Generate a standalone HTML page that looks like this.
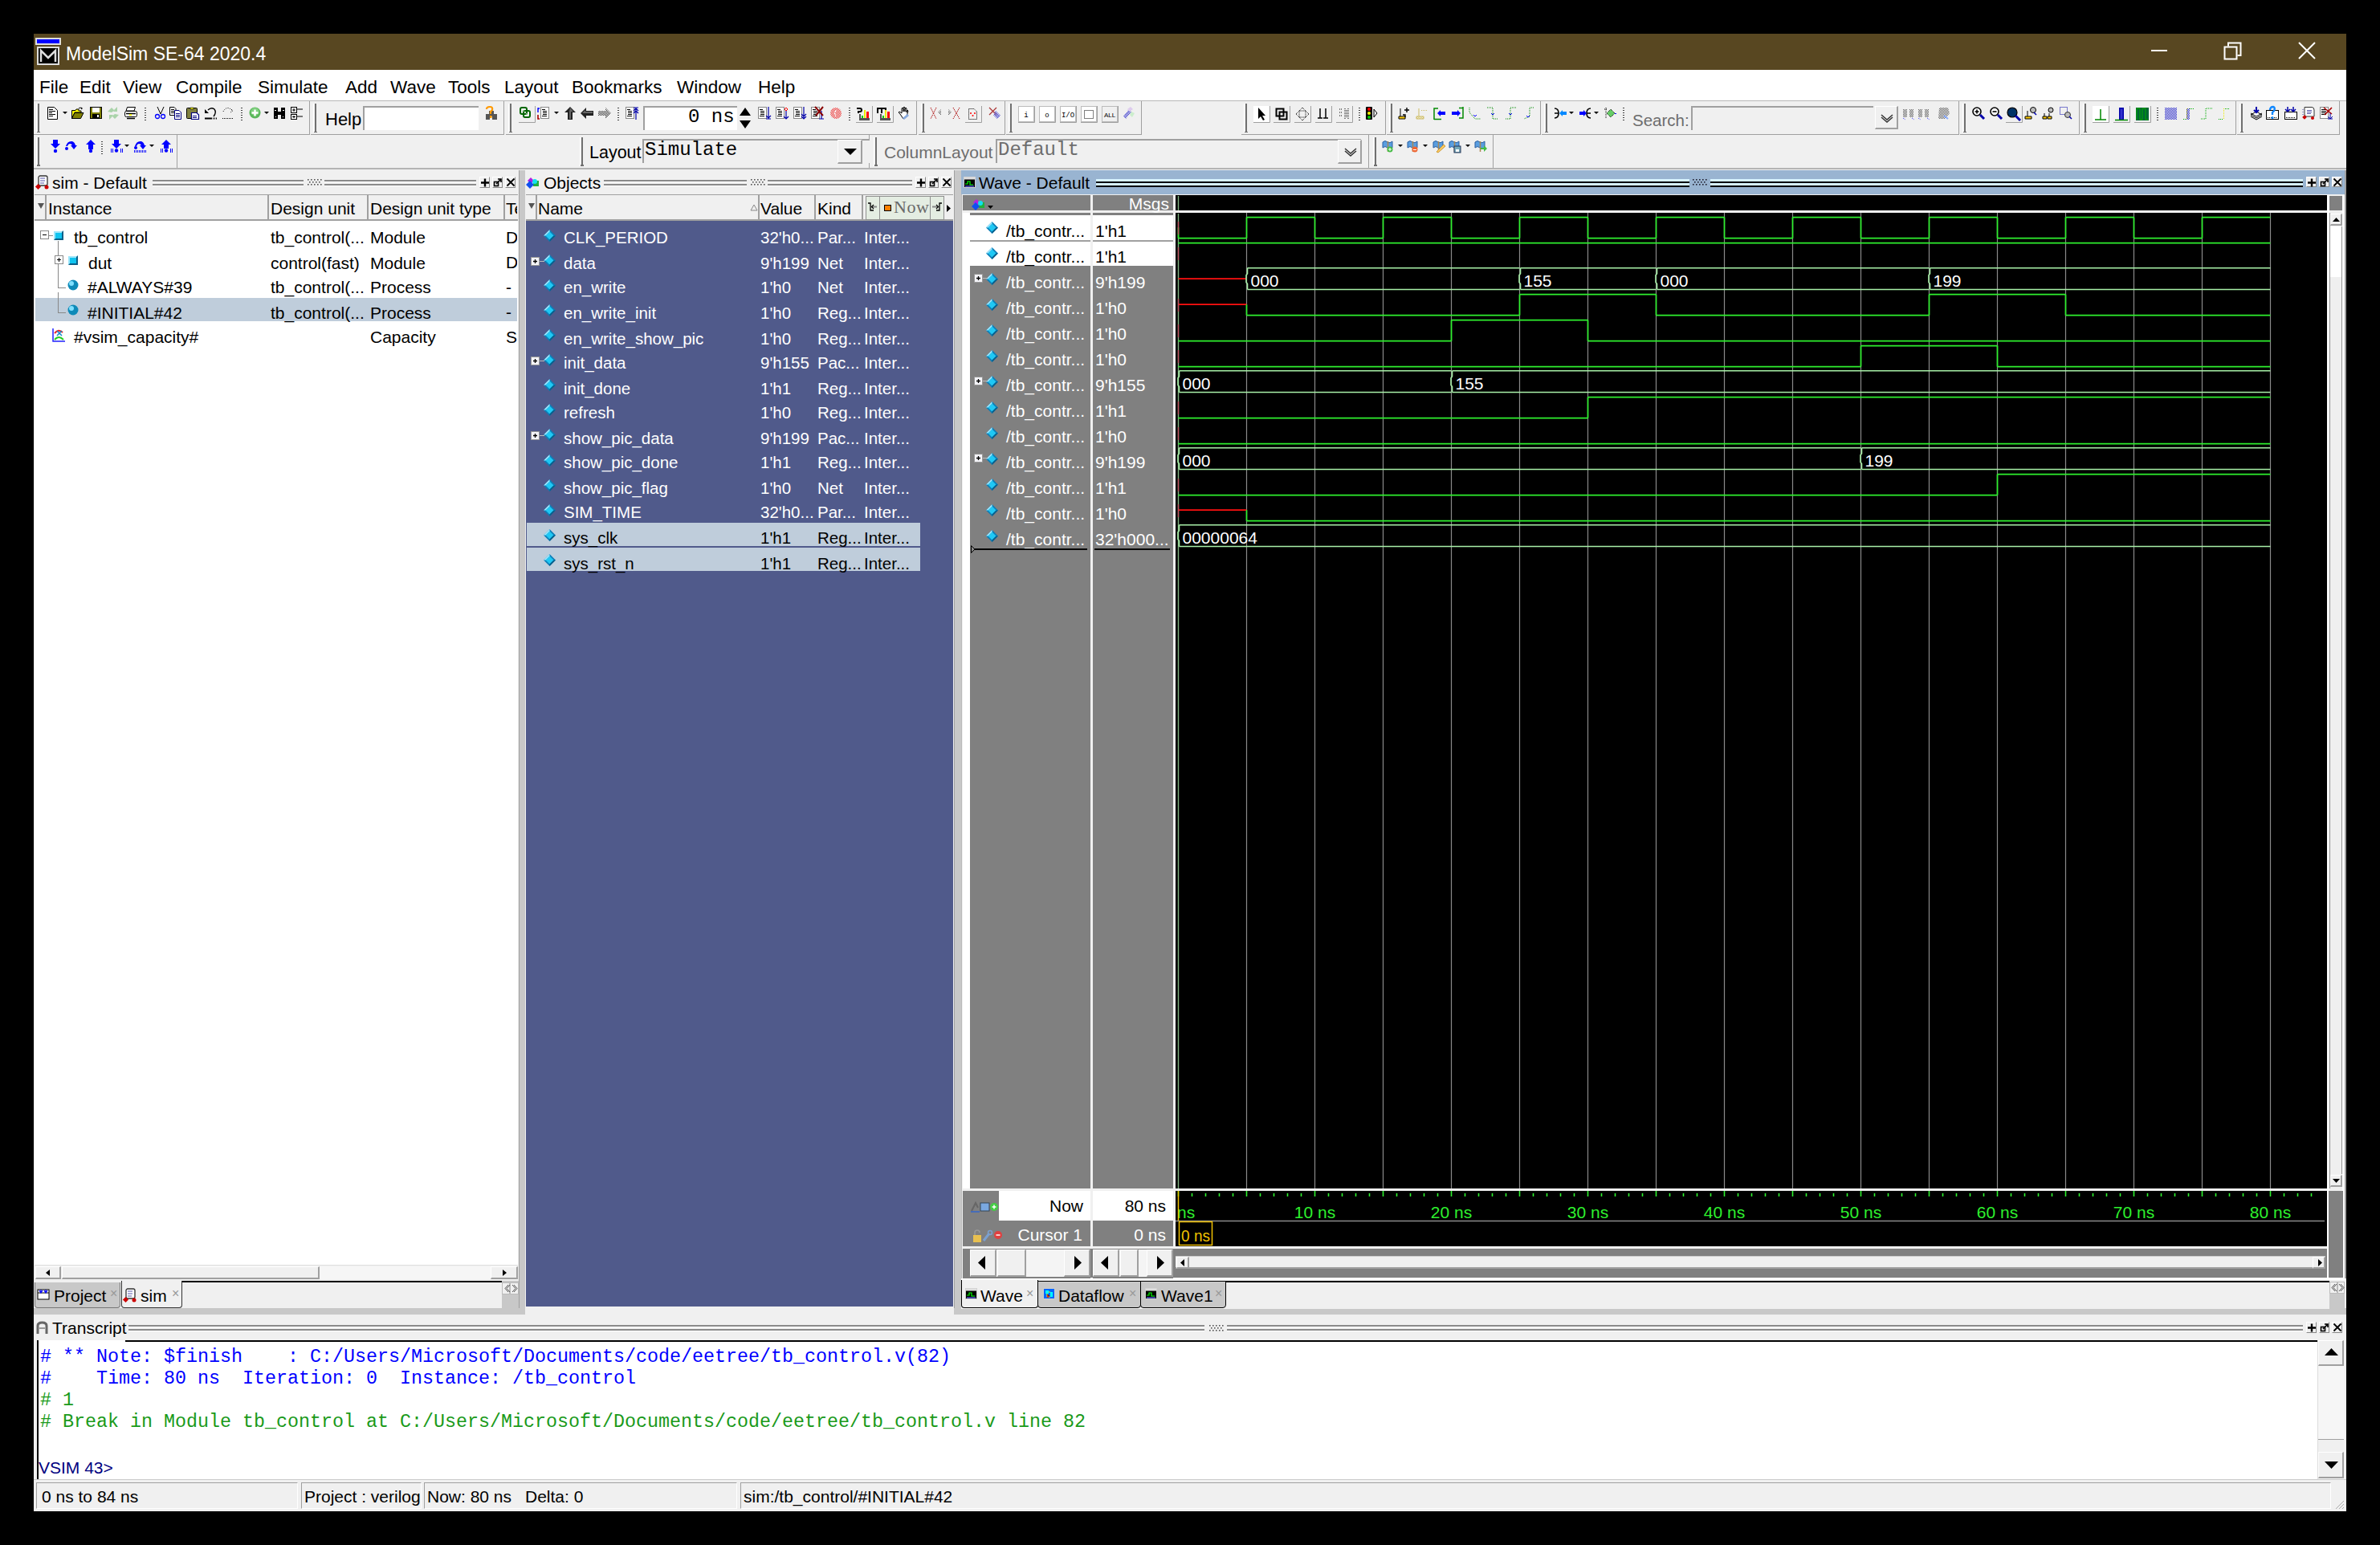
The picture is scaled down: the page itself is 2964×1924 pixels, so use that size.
<!DOCTYPE html><html><head><meta charset="utf-8"><style>
html,body{margin:0;padding:0;background:#000;width:2964px;height:1924px;overflow:hidden;position:relative}
div{box-sizing:border-box}
.s{position:absolute;font-family:"Liberation Sans",sans-serif;white-space:nowrap}
.m{position:absolute;font-family:"Liberation Mono",monospace;white-space:nowrap}
svg{position:absolute;overflow:visible}
</style></head><body>
<div style="position:absolute;left:42px;top:42px;width:2880px;height:1840px;background:#f0f0f0"></div>
<div style="position:absolute;left:42px;top:42px;width:2880px;height:45px;background:#584721"></div>
<div style="position:absolute;left:44px;top:47px;width:32px;height:9px;background:#0000ff;border:2px solid #ddd"></div>
<div style="position:absolute;left:46px;top:58px;width:28px;height:23px;background:#000;border:2px solid #ddd"></div>
<svg style="left:46px;top:58px" width="28" height="23"><path d="M5 19 V5 L14 14 L23 5 V19" stroke="#ddd" stroke-width="2.5" fill="none"/></svg>
<div class="s" style="left:82px;top:52px;font-size:23px;line-height:30px;color:#fff;">ModelSim SE-64 2020.4</div>
<div style="position:absolute;left:2679px;top:62px;width:20px;height:2px;background:#fff"></div>
<svg style="left:2768px;top:51px" width="26" height="26"><rect x="2.5" y="7.5" width="15" height="15" fill="none" stroke="#fff" stroke-width="2"/><path d="M7 6.5 V2.5 H22.5 V18 H18.5" fill="none" stroke="#fff" stroke-width="2"/></svg>
<svg style="left:2861px;top:51px" width="26" height="26"><path d="M2 2 L22 22 M22 2 L2 22" stroke="#fff" stroke-width="2"/></svg>
<div style="position:absolute;left:42px;top:87px;width:2880px;height:38px;background:#fff"></div>
<div class="s" style="left:49px;top:94px;font-size:22.5px;line-height:29px;color:#000;">File</div>
<div class="s" style="left:99px;top:94px;font-size:22.5px;line-height:29px;color:#000;">Edit</div>
<div class="s" style="left:153px;top:94px;font-size:22.5px;line-height:29px;color:#000;">View</div>
<div class="s" style="left:219px;top:94px;font-size:22.5px;line-height:29px;color:#000;">Compile</div>
<div class="s" style="left:321px;top:94px;font-size:22.5px;line-height:29px;color:#000;">Simulate</div>
<div class="s" style="left:430px;top:94px;font-size:22.5px;line-height:29px;color:#000;">Add</div>
<div class="s" style="left:486px;top:94px;font-size:22.5px;line-height:29px;color:#000;">Wave</div>
<div class="s" style="left:558px;top:94px;font-size:22.5px;line-height:29px;color:#000;">Tools</div>
<div class="s" style="left:628px;top:94px;font-size:22.5px;line-height:29px;color:#000;">Layout</div>
<div class="s" style="left:712px;top:94px;font-size:22.5px;line-height:29px;color:#000;">Bookmarks</div>
<div class="s" style="left:843px;top:94px;font-size:22.5px;line-height:29px;color:#000;">Window</div>
<div class="s" style="left:944px;top:94px;font-size:22.5px;line-height:29px;color:#000;">Help</div>
<div style="position:absolute;left:42px;top:125px;width:2880px;height:85px;background:#f0f0f0;border-top:1px solid #b8b8b8"></div>
<div style="position:absolute;left:42px;top:126px;width:344px;height:42px;border-right:1.5px solid #a0a0a0;border-bottom:1.5px solid #a0a0a0"></div>
<div style="position:absolute;left:45px;top:129px;width:4px;height:36px;border-left:1px solid #fff;border-right:2px solid #707070"></div>
<div style="position:absolute;left:46px;top:163.5px;width:4px;height:1.5px;background:#707070"></div>
<div style="position:absolute;left:387px;top:126px;width:241px;height:42px;border-right:1.5px solid #a0a0a0;border-bottom:1.5px solid #a0a0a0"></div>
<div style="position:absolute;left:390px;top:129px;width:4px;height:36px;border-left:1px solid #fff;border-right:2px solid #707070"></div>
<div style="position:absolute;left:391px;top:163.5px;width:4px;height:1.5px;background:#707070"></div>
<div style="position:absolute;left:630px;top:126px;width:512px;height:42px;border-right:1.5px solid #a0a0a0;border-bottom:1.5px solid #a0a0a0"></div>
<div style="position:absolute;left:633px;top:129px;width:4px;height:36px;border-left:1px solid #fff;border-right:2px solid #707070"></div>
<div style="position:absolute;left:634px;top:163.5px;width:4px;height:1.5px;background:#707070"></div>
<div style="position:absolute;left:1144px;top:126px;width:108px;height:42px;border-right:1.5px solid #a0a0a0;border-bottom:1.5px solid #a0a0a0"></div>
<div style="position:absolute;left:1147px;top:129px;width:4px;height:36px;border-left:1px solid #fff;border-right:2px solid #707070"></div>
<div style="position:absolute;left:1148px;top:163.5px;width:4px;height:1.5px;background:#707070"></div>
<div style="position:absolute;left:1253px;top:126px;width:169px;height:42px;border-right:1.5px solid #a0a0a0;border-bottom:1.5px solid #a0a0a0"></div>
<div style="position:absolute;left:1256px;top:129px;width:4px;height:36px;border-left:1px solid #fff;border-right:2px solid #707070"></div>
<div style="position:absolute;left:1257px;top:163.5px;width:4px;height:1.5px;background:#707070"></div>
<div style="position:absolute;left:1546px;top:126px;width:180px;height:42px;border-right:1.5px solid #a0a0a0;border-bottom:1.5px solid #a0a0a0"></div>
<div style="position:absolute;left:1549px;top:129px;width:4px;height:36px;border-left:1px solid #fff;border-right:2px solid #707070"></div>
<div style="position:absolute;left:1550px;top:163.5px;width:4px;height:1.5px;background:#707070"></div>
<div style="position:absolute;left:1727px;top:126px;width:192px;height:42px;border-right:1.5px solid #a0a0a0;border-bottom:1.5px solid #a0a0a0"></div>
<div style="position:absolute;left:1730px;top:129px;width:4px;height:36px;border-left:1px solid #fff;border-right:2px solid #707070"></div>
<div style="position:absolute;left:1731px;top:163.5px;width:4px;height:1.5px;background:#707070"></div>
<div style="position:absolute;left:1920px;top:126px;width:520px;height:42px;border-right:1.5px solid #a0a0a0;border-bottom:1.5px solid #a0a0a0"></div>
<div style="position:absolute;left:1923px;top:129px;width:4px;height:36px;border-left:1px solid #fff;border-right:2px solid #707070"></div>
<div style="position:absolute;left:1924px;top:163.5px;width:4px;height:1.5px;background:#707070"></div>
<div style="position:absolute;left:2441px;top:126px;width:149px;height:42px;border-right:1.5px solid #a0a0a0;border-bottom:1.5px solid #a0a0a0"></div>
<div style="position:absolute;left:2444px;top:129px;width:4px;height:36px;border-left:1px solid #fff;border-right:2px solid #707070"></div>
<div style="position:absolute;left:2445px;top:163.5px;width:4px;height:1.5px;background:#707070"></div>
<div style="position:absolute;left:2591px;top:126px;width:194px;height:42px;border-right:1.5px solid #a0a0a0;border-bottom:1.5px solid #a0a0a0"></div>
<div style="position:absolute;left:2594px;top:129px;width:4px;height:36px;border-left:1px solid #fff;border-right:2px solid #707070"></div>
<div style="position:absolute;left:2595px;top:163.5px;width:4px;height:1.5px;background:#707070"></div>
<div style="position:absolute;left:2786px;top:126px;width:128px;height:42px;border-right:1.5px solid #a0a0a0;border-bottom:1.5px solid #a0a0a0"></div>
<div style="position:absolute;left:2789px;top:129px;width:4px;height:36px;border-left:1px solid #fff;border-right:2px solid #707070"></div>
<div style="position:absolute;left:2790px;top:163.5px;width:4px;height:1.5px;background:#707070"></div>
<div style="position:absolute;left:42px;top:168px;width:179px;height:41.5px;border-right:1.5px solid #a0a0a0;border-bottom:1.5px solid #a0a0a0"></div>
<div style="position:absolute;left:45px;top:171px;width:4px;height:35.5px;border-left:1px solid #fff;border-right:2px solid #707070"></div>
<div style="position:absolute;left:46px;top:205.0px;width:4px;height:1.5px;background:#707070"></div>
<div style="position:absolute;left:719px;top:168px;width:364px;height:41.5px;border-right:1.5px solid #a0a0a0;border-bottom:1.5px solid #a0a0a0"></div>
<div style="position:absolute;left:722px;top:171px;width:4px;height:35.5px;border-left:1px solid #fff;border-right:2px solid #707070"></div>
<div style="position:absolute;left:723px;top:205.0px;width:4px;height:1.5px;background:#707070"></div>
<div style="position:absolute;left:1085px;top:168px;width:620px;height:41.5px;border-right:1.5px solid #a0a0a0;border-bottom:1.5px solid #a0a0a0"></div>
<div style="position:absolute;left:1088px;top:171px;width:4px;height:35.5px;border-left:1px solid #fff;border-right:2px solid #707070"></div>
<div style="position:absolute;left:1089px;top:205.0px;width:4px;height:1.5px;background:#707070"></div>
<div style="position:absolute;left:1707px;top:168px;width:153px;height:41.5px;border-right:1.5px solid #a0a0a0;border-bottom:1.5px solid #a0a0a0"></div>
<div style="position:absolute;left:1710px;top:171px;width:4px;height:35.5px;border-left:1px solid #fff;border-right:2px solid #707070"></div>
<div style="position:absolute;left:1711px;top:205.0px;width:4px;height:1.5px;background:#707070"></div>
<div class="s" style="left:405px;top:134px;font-size:22px;line-height:29px;color:#000;">Help</div>
<div style="position:absolute;left:452px;top:132px;width:144px;height:30px;background:#fff;border-top:2px solid #a0a0a0;border-left:2px solid #a0a0a0"></div>
<div style="position:absolute;left:801px;top:132px;width:117px;height:30px;background:#fff;border-top:2px solid #a0a0a0;border-left:2px solid #a0a0a0"></div>
<div class="m" style="left:857px;top:131px;font-size:24px;line-height:30px">0 ns</div>
<svg style="left:918px;top:131px" width="20" height="32"><path d="M3 13 L10 3 L17 13Z M3 19 L10 29 L17 19Z" fill="#000"/></svg>
<div class="s" style="left:734px;top:176px;font-size:21.5px;line-height:28px;color:#000;">Layout</div>
<div style="position:absolute;left:800px;top:173px;width:283px;height:30px;background:#f0f0f0;border-top:2px solid #a0a0a0;border-left:2px solid #a0a0a0"></div>
<div class="m" style="left:803px;top:172px;font-size:24px;line-height:30px;color:#000">Simulate</div>
<div style="position:absolute;left:1043px;top:174px;width:31px;height:30px;background:#f0f0f0;border-right:2px solid #a0a0a0;border-bottom:2px solid #a0a0a0;border-top:1px solid #fff;border-left:1px solid #fff"></div>
<svg style="left:1050px;top:183px" width="18" height="12"><path d="M1 2 H17 L9 10Z" fill="#000"/></svg>
<div class="s" style="left:1101px;top:176px;font-size:21px;line-height:27px;color:#6d6d6d;">ColumnLayout</div>
<div style="position:absolute;left:1240px;top:173px;width:455px;height:30px;background:#f0f0f0;border-top:2px solid #a0a0a0;border-left:2px solid #a0a0a0"></div>
<div class="m" style="left:1243px;top:172px;font-size:24px;line-height:30px;color:#6d6d6d">Default</div>
<div style="position:absolute;left:1666px;top:174px;width:30px;height:30px;background:#f0f0f0;border-right:2px solid #a0a0a0;border-bottom:2px solid #a0a0a0;border-top:1px solid #fff;border-left:1px solid #fff"></div>
<svg style="left:1673px;top:183px" width="18" height="12"><path d="M2 2 L9 8 L16 2 M2 5 L9 11 L16 5" stroke="#333" stroke-width="1.5" fill="none"/></svg>
<div class="s" style="left:2033px;top:136px;font-size:20.5px;line-height:27px;color:#6d6d6d;">Search:</div>
<div style="position:absolute;left:2106px;top:132px;width:227px;height:30px;background:#f0f0f0;border-top:2px solid #a0a0a0;border-left:2px solid #a0a0a0"></div>
<div style="position:absolute;left:2335px;top:132px;width:29px;height:29px;background:#f0f0f0;border-right:2px solid #a0a0a0;border-bottom:2px solid #a0a0a0;border-top:1px solid #fff;border-left:1px solid #fff"></div>
<svg style="left:2341px;top:141px" width="18" height="12"><path d="M2 2 L9 8 L16 2 M2 5 L9 11 L16 5" stroke="#333" stroke-width="1.5" fill="none"/></svg>
<div style="position:absolute;left:180px;top:134px;width:2px;height:18px;background:repeating-linear-gradient(180deg,#444 0 1.5px,transparent 1.5px 3px);width:1.5px"></div>
<div style="position:absolute;left:300px;top:134px;width:2px;height:18px;background:repeating-linear-gradient(180deg,#444 0 1.5px,transparent 1.5px 3px);width:1.5px"></div>
<div style="position:absolute;left:769px;top:134px;width:2px;height:18px;background:repeating-linear-gradient(180deg,#444 0 1.5px,transparent 1.5px 3px);width:1.5px"></div>
<div style="position:absolute;left:1057px;top:134px;width:2px;height:18px;background:repeating-linear-gradient(180deg,#444 0 1.5px,transparent 1.5px 3px);width:1.5px"></div>
<div style="position:absolute;left:1692px;top:134px;width:2px;height:18px;background:repeating-linear-gradient(180deg,#444 0 1.5px,transparent 1.5px 3px);width:1.5px"></div>
<div style="position:absolute;left:2021px;top:134px;width:2px;height:18px;background:repeating-linear-gradient(180deg,#444 0 1.5px,transparent 1.5px 3px);width:1.5px"></div>
<div style="position:absolute;left:2686px;top:134px;width:2px;height:18px;background:repeating-linear-gradient(180deg,#444 0 1.5px,transparent 1.5px 3px);width:1.5px"></div>
<div style="position:absolute;left:126px;top:176px;width:2px;height:16px;background:repeating-linear-gradient(180deg,#444 0 1.5px,transparent 1.5px 3px);width:1.5px"></div>
<div style="position:absolute;left:42px;top:209px;width:2880px;height:2px;background:#b4b4b4"></div>
<div style="position:absolute;left:646px;top:212px;width:8px;height:1425px;background:#c8c8c8;border-left:1px solid #a0a0a0"></div>
<div style="position:absolute;left:1188px;top:212px;width:9px;height:1425px;background:#c8c8c8;border-left:1px solid #a0a0a0"></div>
<div style="position:absolute;left:42px;top:212px;width:604px;height:1425px;background:#f0f0f0"></div>
<svg style="left:44px;top:218px" width="18" height="18"><rect x="4" y="1" width="11" height="12" rx="2" fill="#fff" stroke="#333" stroke-width="1.3"/><path d="M6 4H12M6 7H12M6 10H11" stroke="#55a" stroke-width="1"/><rect x="1" y="12" width="5" height="5" fill="#c00" transform="rotate(45 3.5 14.5)"/><circle cx="14" cy="15" r="2.5" fill="#c00"/></svg>
<div class="s" style="left:65px;top:214px;font-size:21px;line-height:27px;color:#000;">sim - Default</div>
<div style="position:absolute;left:190px;top:224px;width:403px;height:1.5px;background:#8a8a8a"></div>
<div style="position:absolute;left:190px;top:225.5px;width:403px;height:1.0px;background:#fff"></div>
<div style="position:absolute;left:190px;top:229px;width:403px;height:1.5px;background:#8a8a8a"></div>
<div style="position:absolute;left:190px;top:230.5px;width:403px;height:1.0px;background:#fff"></div>
<div style="position:absolute;left:378px;top:222px;width:26px;height:11px;background:#f0f0f0"></div>
<svg style="left:0;top:223px" width="2964" height="10"><rect x="383" y="0" width="1.6" height="1.6" fill="#555"/><rect x="387" y="0" width="1.6" height="1.6" fill="#555"/><rect x="391" y="0" width="1.6" height="1.6" fill="#555"/><rect x="395" y="0" width="1.6" height="1.6" fill="#555"/><rect x="399" y="0" width="1.6" height="1.6" fill="#555"/><rect x="385" y="3" width="1.6" height="1.6" fill="#555"/><rect x="389" y="3" width="1.6" height="1.6" fill="#555"/><rect x="393" y="3" width="1.6" height="1.6" fill="#555"/><rect x="397" y="3" width="1.6" height="1.6" fill="#555"/><rect x="383" y="6" width="1.6" height="1.6" fill="#555"/><rect x="387" y="6" width="1.6" height="1.6" fill="#555"/><rect x="391" y="6" width="1.6" height="1.6" fill="#555"/><rect x="395" y="6" width="1.6" height="1.6" fill="#555"/><rect x="399" y="6" width="1.6" height="1.6" fill="#555"/></svg>
<div style="position:absolute;left:597px;top:220px;width:13px;height:14px;background:#f0f0f0;border-right:1px solid #888;border-bottom:1px solid #888;border-top:1px solid #fff;border-left:1px solid #fff"></div>
<svg style="left:598px;top:221px" width="12" height="13"><path d="M6 1.5V11.5M1 6.5H11" stroke="#000" stroke-width="2.4"/></svg>
<div style="position:absolute;left:613px;top:220px;width:13px;height:14px;background:#f0f0f0;border-right:1px solid #888;border-bottom:1px solid #888;border-top:1px solid #fff;border-left:1px solid #fff"></div>
<svg style="left:614px;top:221px" width="12" height="13"><rect x="1.5" y="5.5" width="5" height="5" fill="none" stroke="#000" stroke-width="1.6"/><path d="M4 8 L10 2 M6 2H10V6" stroke="#000" stroke-width="1.6" fill="none"/></svg>
<div style="position:absolute;left:629px;top:220px;width:13px;height:14px;background:#f0f0f0;border-right:1px solid #888;border-bottom:1px solid #888;border-top:1px solid #fff;border-left:1px solid #fff"></div>
<svg style="left:630px;top:221px" width="12" height="13"><path d="M1.5 1.5L10.5 10.5M10.5 1.5L1.5 10.5" stroke="#000" stroke-width="1.8"/></svg>
<div style="position:absolute;left:43px;top:242px;width:602px;height:33px;background:#f0f0f0;border-top:1px solid #a0a0a0;border-bottom:2px solid #a0a0a0"></div>
<div style="position:absolute;left:56px;top:243px;width:2px;height:30px;background:#a0a0a0"></div>
<div style="position:absolute;left:333px;top:243px;width:2px;height:30px;background:#a0a0a0"></div>
<div style="position:absolute;left:457px;top:243px;width:2px;height:30px;background:#a0a0a0"></div>
<div style="position:absolute;left:627px;top:243px;width:2px;height:30px;background:#a0a0a0"></div>
<svg style="left:47px;top:253px" width="8" height="8"><path d="M0 0H8L4 7Z" fill="#555"/></svg>
<div class="s" style="left:60px;top:246px;font-size:21px;line-height:27px;color:#000;">Instance</div>
<div class="s" style="left:337px;top:246px;font-size:21px;line-height:27px;color:#000;">Design unit</div>
<div class="s" style="left:461px;top:246px;font-size:21px;line-height:27px;color:#000;">Design unit type</div>
<div class="s" style="left:630px;top:246px;width:14px;overflow:hidden;font-size:21px;line-height:27px">Te</div>
<div style="position:absolute;left:43px;top:275px;width:602px;height:1300px;background:#fff"></div>
<div style="position:absolute;left:44px;top:371px;width:600px;height:29px;background:#bfcddb"></div>
<div class="s" style="left:92px;top:282px;font-size:21px;line-height:27px;color:#000;">tb_control</div>
<div class="s" style="left:337px;top:282px;font-size:21px;line-height:27px;color:#000;">tb_control(...</div>
<div class="s" style="left:461px;top:282px;font-size:21px;line-height:27px;color:#000;">Module</div>
<div class="s" style="left:630px;top:282px;width:14px;overflow:hidden;font-size:21px;line-height:27px">D</div>
<div class="s" style="left:110px;top:314px;font-size:21px;line-height:27px;color:#000;">dut</div>
<div class="s" style="left:337px;top:314px;font-size:21px;line-height:27px;color:#000;">control(fast)</div>
<div class="s" style="left:461px;top:314px;font-size:21px;line-height:27px;color:#000;">Module</div>
<div class="s" style="left:630px;top:313px;width:14px;overflow:hidden;font-size:21px;line-height:27px">D</div>
<div class="s" style="left:109px;top:344px;font-size:21px;line-height:27px;color:#000;">#ALWAYS#39</div>
<div class="s" style="left:337px;top:344px;font-size:21px;line-height:27px;color:#000;">tb_control(...</div>
<div class="s" style="left:461px;top:344px;font-size:21px;line-height:27px;color:#000;">Process</div>
<div class="s" style="left:630px;top:344px;width:14px;overflow:hidden;font-size:21px;line-height:27px">-</div>
<div class="s" style="left:109px;top:376px;font-size:21px;line-height:27px;color:#000;">#INITIAL#42</div>
<div class="s" style="left:337px;top:376px;font-size:21px;line-height:27px;color:#000;">tb_control(...</div>
<div class="s" style="left:461px;top:376px;font-size:21px;line-height:27px;color:#000;">Process</div>
<div class="s" style="left:630px;top:375px;width:14px;overflow:hidden;font-size:21px;line-height:27px">-</div>
<div class="s" style="left:92px;top:406px;font-size:21px;line-height:27px;color:#000;">#vsim_capacity#</div>
<div class="s" style="left:337px;top:406px;font-size:21px;line-height:27px;color:#000;"></div>
<div class="s" style="left:461px;top:406px;font-size:21px;line-height:27px;color:#000;">Capacity</div>
<div class="s" style="left:630px;top:406px;width:14px;overflow:hidden;font-size:21px;line-height:27px">Sta</div>
<div style="position:absolute;left:72px;top:300px;width:1px;height:58px;background:#888"></div>
<div style="position:absolute;left:72px;top:364px;width:1px;height:26px;background:#888"></div>
<div style="position:absolute;left:72px;top:358px;width:10px;height:1px;background:#888"></div>
<div style="position:absolute;left:72px;top:389px;width:10px;height:1px;background:#888"></div>
<div style="position:absolute;left:56px;top:293px;width:10px;height:1px;background:#888"></div>
<svg style="left:50px;top:287px" width="12" height="12"><rect x="0.5" y="0.5" width="10" height="10" fill="#fff" stroke="#888"/><path d="M3 5.5H8" stroke="#000"/></svg>
<svg style="left:68px;top:318px" width="12" height="12"><rect x="0.5" y="0.5" width="10" height="10" fill="#fff" stroke="#888"/><path d="M3 5.5H8M5.5 3V8" stroke="#000"/></svg>
<svg style="left:67px;top:287px" width="14" height="14"><path d="M0 1H11V12H0Z" fill="#9ee6fa"/><path d="M2 3H11V12H2Z" fill="#10c4f0"/><path d="M12 0V12H0L2 10H10V2Z" fill="#0b5f88"/></svg>
<svg style="left:85px;top:318px" width="14" height="14"><path d="M0 1H11V12H0Z" fill="#9ee6fa"/><path d="M2 3H11V12H2Z" fill="#10c4f0"/><path d="M12 0V12H0L2 10H10V2Z" fill="#0b5f88"/></svg>
<svg style="left:84px;top:348px" width="14" height="14"><circle cx="7" cy="7" r="6.5" fill="#0e8ab8"/><circle cx="5" cy="5" r="3" fill="#7fe0ff"/></svg>
<svg style="left:84px;top:379px" width="14" height="14"><circle cx="7" cy="7" r="6.5" fill="#0e8ab8"/><circle cx="5" cy="5" r="3" fill="#7fe0ff"/></svg>
<svg style="left:65px;top:409px" width="17" height="17"><path d="M1 0V16H16" stroke="#22f" stroke-width="1.5" fill="none"/><path d="M3 6Q8 0 13 5" stroke="#e22" stroke-width="2" fill="none"/><path d="M6 3L12 9M12 3L6 9" stroke="#18c" stroke-width="1.5"/><path d="M3 14Q8 8 14 14" stroke="#2c2" stroke-width="2" fill="none"/></svg>
<div style="position:absolute;left:43px;top:1575px;width:602px;height:20px;background:#f0f0f0;border-top:1px solid #e0e0e0"></div>
<div style="position:absolute;left:44px;top:1577px;width:32px;height:16px;background:#f0f0f0;border-right:2px solid #a0a0a0;border-bottom:2px solid #a0a0a0;border-top:1px solid #fff;border-left:1px solid #fff"></div>
<div style="position:absolute;left:77px;top:1577px;width:321px;height:16px;background:#f0f0f0;border-right:2px solid #a0a0a0;border-bottom:2px solid #a0a0a0;border-top:1px solid #fff;border-left:1px solid #fff"></div>
<div style="position:absolute;left:398px;top:1577px;width:213px;height:16px;background:#f6f6f6"></div>
<div style="position:absolute;left:611px;top:1577px;width:34px;height:16px;background:#f0f0f0;border-right:2px solid #a0a0a0;border-bottom:2px solid #a0a0a0;border-top:1px solid #fff;border-left:1px solid #fff"></div>
<svg style="left:56px;top:1581px" width="8" height="8"><path d="M6 0V8L1 4Z" fill="#000"/></svg>
<svg style="left:624px;top:1581px" width="8" height="8"><path d="M2 0V8L7 4Z" fill="#000"/></svg>
<div style="position:absolute;left:43px;top:1595px;width:603px;height:34px;background:#f0f0f0"></div>
<div style="position:absolute;left:226px;top:1595px;width:399px;height:2px;background:#000"></div>
<div style="position:absolute;left:625px;top:1595px;width:21px;height:34px;background:#c8c8c8"></div>
<div style="position:absolute;left:43px;top:1597px;width:107px;height:32px;background:#c8c8c8;border:1px solid #777;border-top:none;border-radius:0 0 4px 4px"></div>
<div style="position:absolute;left:151px;top:1595px;width:76px;height:34px;background:#f0f0f0;border:1px solid #333;border-top:none;border-radius:0 0 4px 4px"></div>
<div class="s" style="left:67px;top:1600px;font-size:21px;line-height:27px;color:#000;">Project</div>
<div class="s" style="left:175px;top:1600px;font-size:21px;line-height:27px;color:#000;">sim</div>
<div class="s" style="left:137px;top:1602px;font-size:16px;line-height:18px;color:#999">&#215;</div>
<div class="s" style="left:214px;top:1602px;font-size:16px;line-height:18px;color:#999">&#215;</div>
<svg style="left:46px;top:1603px" width="16" height="16"><rect x="1" y="3" width="14" height="12" fill="#fff" stroke="#000"/><path d="M1 7H15" stroke="#000"/><path d="M5 3V8M11 3V8M3 4L5 7L7 4M9 4L11 7L13 4" stroke="#00f" stroke-width="1.2" fill="none"/></svg>
<svg style="left:153px;top:1604px" width="18" height="18"><rect x="4" y="1" width="11" height="12" rx="2" fill="#fff" stroke="#333" stroke-width="1.3"/><path d="M6 4H12M6 7H12M6 10H11" stroke="#55a" stroke-width="1"/><rect x="1" y="12" width="5" height="5" fill="#c00" transform="rotate(45 3.5 14.5)"/><circle cx="14" cy="15" r="2.5" fill="#c00"/></svg>
<div style="position:absolute;left:625px;top:1597px;width:10px;height:15px;background:#f0f0f0;border:1px solid #bbb"></div>
<div style="position:absolute;left:635px;top:1597px;width:11px;height:15px;background:#f0f0f0;border:1px solid #bbb"></div>
<svg style="left:626px;top:1599px" width="20" height="12"><path d="M7 1L3 5.5L7 10M9 1L5 5.5L9 10" stroke="#555" fill="none"/><path d="M12 1L16 5.5L12 10M14 1L18 5.5L14 10" stroke="#555" fill="none"/></svg>
<div style="position:absolute;left:42px;top:1629px;width:2880px;height:8px;background:#c8c8c8"></div>
<div style="position:absolute;left:654px;top:212px;width:534px;height:1425px;background:#f0f0f0"></div>
<svg style="left:655px;top:219px" width="18" height="16"><path d="M2 6L6 2L10 6L6 10Z" fill="#b020e0"/><rect x="9" y="6" width="7" height="7" fill="#20b040"/><path d="M0 11L5 6L10 11L5 16Z" fill="#1050f0"/><circle cx="11" cy="7" r="3" fill="#10e0f0"/></svg>
<div class="s" style="left:677px;top:214px;font-size:21px;line-height:27px;color:#000;">Objects</div>
<div style="position:absolute;left:752px;top:224px;width:384px;height:1.5px;background:#8a8a8a"></div>
<div style="position:absolute;left:752px;top:225.5px;width:384px;height:1.0px;background:#fff"></div>
<div style="position:absolute;left:752px;top:229px;width:384px;height:1.5px;background:#8a8a8a"></div>
<div style="position:absolute;left:752px;top:230.5px;width:384px;height:1.0px;background:#fff"></div>
<div style="position:absolute;left:930px;top:222px;width:26px;height:11px;background:#f0f0f0"></div>
<svg style="left:0;top:223px" width="2964" height="10"><rect x="935" y="0" width="1.6" height="1.6" fill="#555"/><rect x="939" y="0" width="1.6" height="1.6" fill="#555"/><rect x="943" y="0" width="1.6" height="1.6" fill="#555"/><rect x="947" y="0" width="1.6" height="1.6" fill="#555"/><rect x="951" y="0" width="1.6" height="1.6" fill="#555"/><rect x="937" y="3" width="1.6" height="1.6" fill="#555"/><rect x="941" y="3" width="1.6" height="1.6" fill="#555"/><rect x="945" y="3" width="1.6" height="1.6" fill="#555"/><rect x="949" y="3" width="1.6" height="1.6" fill="#555"/><rect x="935" y="6" width="1.6" height="1.6" fill="#555"/><rect x="939" y="6" width="1.6" height="1.6" fill="#555"/><rect x="943" y="6" width="1.6" height="1.6" fill="#555"/><rect x="947" y="6" width="1.6" height="1.6" fill="#555"/><rect x="951" y="6" width="1.6" height="1.6" fill="#555"/></svg>
<div style="position:absolute;left:1140px;top:220px;width:13px;height:14px;background:#f0f0f0;border-right:1px solid #888;border-bottom:1px solid #888;border-top:1px solid #fff;border-left:1px solid #fff"></div>
<svg style="left:1141px;top:221px" width="12" height="13"><path d="M6 1.5V11.5M1 6.5H11" stroke="#000" stroke-width="2.4"/></svg>
<div style="position:absolute;left:1156px;top:220px;width:13px;height:14px;background:#f0f0f0;border-right:1px solid #888;border-bottom:1px solid #888;border-top:1px solid #fff;border-left:1px solid #fff"></div>
<svg style="left:1157px;top:221px" width="12" height="13"><rect x="1.5" y="5.5" width="5" height="5" fill="none" stroke="#000" stroke-width="1.6"/><path d="M4 8 L10 2 M6 2H10V6" stroke="#000" stroke-width="1.6" fill="none"/></svg>
<div style="position:absolute;left:1172px;top:220px;width:13px;height:14px;background:#f0f0f0;border-right:1px solid #888;border-bottom:1px solid #888;border-top:1px solid #fff;border-left:1px solid #fff"></div>
<svg style="left:1173px;top:221px" width="12" height="13"><path d="M1.5 1.5L10.5 10.5M10.5 1.5L1.5 10.5" stroke="#000" stroke-width="1.8"/></svg>
<div style="position:absolute;left:655px;top:242px;width:532px;height:33px;background:#f0f0f0;border-top:1px solid #a0a0a0;border-bottom:2px solid #a0a0a0"></div>
<div style="position:absolute;left:667px;top:243px;width:2px;height:30px;background:#a0a0a0"></div>
<div style="position:absolute;left:944px;top:243px;width:2px;height:30px;background:#a0a0a0"></div>
<div style="position:absolute;left:1014px;top:243px;width:2px;height:30px;background:#a0a0a0"></div>
<div style="position:absolute;left:1073px;top:243px;width:2px;height:30px;background:#a0a0a0"></div>
<svg style="left:658px;top:253px" width="8" height="8"><path d="M0 0H8L4 7Z" fill="#555"/></svg>
<div class="s" style="left:670px;top:246px;font-size:21px;line-height:27px;color:#000;">Name</div>
<div class="s" style="left:947px;top:246px;font-size:21px;line-height:27px;color:#000;">Value</div>
<div class="s" style="left:1018px;top:246px;font-size:21px;line-height:27px;color:#000;">Kind</div>
<svg style="left:934px;top:254px" width="10" height="9"><path d="M1 8H9L5 1Z" fill="none" stroke="#888"/></svg>
<div style="position:absolute;left:1078px;top:244px;width:98px;height:30px;background:#e4ede2;border:1px solid #909090"></div>
<div style="position:absolute;left:1095px;top:245px;width:1px;height:28px;background:#909090"></div>
<div style="position:absolute;left:1158px;top:245px;width:1px;height:28px;background:#909090"></div>
<svg style="left:1080px;top:252px" width="14" height="12"><path d="M1 1H4V10H8" stroke="#000" stroke-width="1.3" fill="none"/><path d="M5 5.5H12" stroke="#888" stroke-width="2"/><path d="M8 3L5.5 5.5L8 8" stroke="#000" stroke-width="1.2" fill="none"/></svg>
<svg style="left:1160px;top:252px" width="14" height="12"><path d="M13 1H10V10H6" stroke="#000" stroke-width="1.3" fill="none"/><path d="M1 5.5H8" stroke="#888" stroke-width="2"/><path d="M6 3L8.5 5.5L6 8" stroke="#000" stroke-width="1.2" fill="none"/></svg>
<div style="position:absolute;left:1101px;top:255px;width:9px;height:8px;background:#ff8000;border:1.5px solid #000"></div>
<div class="s" style="left:1113px;top:243px;font-size:22px;line-height:30px;color:#6a6a6a;letter-spacing:0.6px;font-family:'Liberation Serif',serif">Now</div>
<svg style="left:1179px;top:255px" width="6" height="9"><path d="M0 0V9L5 4.5Z" fill="#000"/></svg>
<div style="position:absolute;left:655px;top:275px;width:532px;height:1352px;background:#505a8b"></div>
<div style="position:absolute;left:656px;top:651px;width:490px;height:29px;background:#bfcddb"></div>
<div style="position:absolute;left:656px;top:682px;width:490px;height:29px;background:#bfcddb"></div>
<div class="s" style="left:702px;top:282px;font-size:20.5px;line-height:27px;color:#fff;">CLK_PERIOD</div>
<div class="s" style="left:947px;top:282px;font-size:20.5px;line-height:27px;color:#fff;">32'h0...</div>
<div class="s" style="left:1018px;top:282px;font-size:20.5px;line-height:27px;color:#fff;">Par...</div>
<div class="s" style="left:1076px;top:282px;font-size:20.5px;line-height:27px;color:#fff;">Inter...</div>
<svg style="left:677px;top:286px" width="15" height="15" viewBox="0 0 15 15"><path d="M7.5 0L15 7.5L7.5 15L0 7.5Z" fill="#0c7fb8"/><path d="M7.5 2.5L12.5 7.5L7.5 12.5L2.5 7.5Z" fill="#1fc8f4"/><path d="M0 7.5L7.5 0L7.5 2.5L2.5 7.5Z" fill="#9ee8ff"/><path d="M7.5 15L15 7.5L12.5 7.5L7.5 12.5Z" fill="#085f8a"/></svg>
<div class="s" style="left:702px;top:314px;font-size:20.5px;line-height:27px;color:#fff;">data</div>
<div class="s" style="left:947px;top:314px;font-size:20.5px;line-height:27px;color:#fff;">9'h199</div>
<div class="s" style="left:1018px;top:314px;font-size:20.5px;line-height:27px;color:#fff;">Net</div>
<div class="s" style="left:1076px;top:314px;font-size:20.5px;line-height:27px;color:#fff;">Inter...</div>
<svg style="left:677px;top:317px" width="15" height="15" viewBox="0 0 15 15"><path d="M7.5 0L15 7.5L7.5 15L0 7.5Z" fill="#0c7fb8"/><path d="M7.5 2.5L12.5 7.5L7.5 12.5L2.5 7.5Z" fill="#1fc8f4"/><path d="M0 7.5L7.5 0L7.5 2.5L2.5 7.5Z" fill="#9ee8ff"/><path d="M7.5 15L15 7.5L12.5 7.5L7.5 12.5Z" fill="#085f8a"/></svg>
<svg style="left:661px;top:320px" width="18" height="12"><rect x="0.5" y="0.5" width="10" height="10" fill="#f4f4f8" stroke="#999"/><path d="M3 5.5H8M5.5 3V8" stroke="#000" stroke-width="1.3"/><path d="M11 5.5H17" stroke="#bbb"/></svg>
<div class="s" style="left:702px;top:344px;font-size:20.5px;line-height:27px;color:#fff;">en_write</div>
<div class="s" style="left:947px;top:344px;font-size:20.5px;line-height:27px;color:#fff;">1'h0</div>
<div class="s" style="left:1018px;top:344px;font-size:20.5px;line-height:27px;color:#fff;">Net</div>
<div class="s" style="left:1076px;top:344px;font-size:20.5px;line-height:27px;color:#fff;">Inter...</div>
<svg style="left:677px;top:348px" width="15" height="15" viewBox="0 0 15 15"><path d="M7.5 0L15 7.5L7.5 15L0 7.5Z" fill="#0c7fb8"/><path d="M7.5 2.5L12.5 7.5L7.5 12.5L2.5 7.5Z" fill="#1fc8f4"/><path d="M0 7.5L7.5 0L7.5 2.5L2.5 7.5Z" fill="#9ee8ff"/><path d="M7.5 15L15 7.5L12.5 7.5L7.5 12.5Z" fill="#085f8a"/></svg>
<div class="s" style="left:702px;top:376px;font-size:20.5px;line-height:27px;color:#fff;">en_write_init</div>
<div class="s" style="left:947px;top:376px;font-size:20.5px;line-height:27px;color:#fff;">1'h0</div>
<div class="s" style="left:1018px;top:376px;font-size:20.5px;line-height:27px;color:#fff;">Reg...</div>
<div class="s" style="left:1076px;top:376px;font-size:20.5px;line-height:27px;color:#fff;">Inter...</div>
<svg style="left:677px;top:379px" width="15" height="15" viewBox="0 0 15 15"><path d="M7.5 0L15 7.5L7.5 15L0 7.5Z" fill="#0c7fb8"/><path d="M7.5 2.5L12.5 7.5L7.5 12.5L2.5 7.5Z" fill="#1fc8f4"/><path d="M0 7.5L7.5 0L7.5 2.5L2.5 7.5Z" fill="#9ee8ff"/><path d="M7.5 15L15 7.5L12.5 7.5L7.5 12.5Z" fill="#085f8a"/></svg>
<div class="s" style="left:702px;top:408px;font-size:20.5px;line-height:27px;color:#fff;">en_write_show_pic</div>
<div class="s" style="left:947px;top:408px;font-size:20.5px;line-height:27px;color:#fff;">1'h0</div>
<div class="s" style="left:1018px;top:408px;font-size:20.5px;line-height:27px;color:#fff;">Reg...</div>
<div class="s" style="left:1076px;top:408px;font-size:20.5px;line-height:27px;color:#fff;">Inter...</div>
<svg style="left:677px;top:410px" width="15" height="15" viewBox="0 0 15 15"><path d="M7.5 0L15 7.5L7.5 15L0 7.5Z" fill="#0c7fb8"/><path d="M7.5 2.5L12.5 7.5L7.5 12.5L2.5 7.5Z" fill="#1fc8f4"/><path d="M0 7.5L7.5 0L7.5 2.5L2.5 7.5Z" fill="#9ee8ff"/><path d="M7.5 15L15 7.5L12.5 7.5L7.5 12.5Z" fill="#085f8a"/></svg>
<div class="s" style="left:702px;top:438px;font-size:20.5px;line-height:27px;color:#fff;">init_data</div>
<div class="s" style="left:947px;top:438px;font-size:20.5px;line-height:27px;color:#fff;">9'h155</div>
<div class="s" style="left:1018px;top:438px;font-size:20.5px;line-height:27px;color:#fff;">Pac...</div>
<div class="s" style="left:1076px;top:438px;font-size:20.5px;line-height:27px;color:#fff;">Inter...</div>
<svg style="left:677px;top:441px" width="15" height="15" viewBox="0 0 15 15"><path d="M7.5 0L15 7.5L7.5 15L0 7.5Z" fill="#0c7fb8"/><path d="M7.5 2.5L12.5 7.5L7.5 12.5L2.5 7.5Z" fill="#1fc8f4"/><path d="M0 7.5L7.5 0L7.5 2.5L2.5 7.5Z" fill="#9ee8ff"/><path d="M7.5 15L15 7.5L12.5 7.5L7.5 12.5Z" fill="#085f8a"/></svg>
<svg style="left:661px;top:444px" width="18" height="12"><rect x="0.5" y="0.5" width="10" height="10" fill="#f4f4f8" stroke="#999"/><path d="M3 5.5H8M5.5 3V8" stroke="#000" stroke-width="1.3"/><path d="M11 5.5H17" stroke="#bbb"/></svg>
<div class="s" style="left:702px;top:470px;font-size:20.5px;line-height:27px;color:#fff;">init_done</div>
<div class="s" style="left:947px;top:470px;font-size:20.5px;line-height:27px;color:#fff;">1'h1</div>
<div class="s" style="left:1018px;top:470px;font-size:20.5px;line-height:27px;color:#fff;">Reg...</div>
<div class="s" style="left:1076px;top:470px;font-size:20.5px;line-height:27px;color:#fff;">Inter...</div>
<svg style="left:677px;top:472px" width="15" height="15" viewBox="0 0 15 15"><path d="M7.5 0L15 7.5L7.5 15L0 7.5Z" fill="#0c7fb8"/><path d="M7.5 2.5L12.5 7.5L7.5 12.5L2.5 7.5Z" fill="#1fc8f4"/><path d="M0 7.5L7.5 0L7.5 2.5L2.5 7.5Z" fill="#9ee8ff"/><path d="M7.5 15L15 7.5L12.5 7.5L7.5 12.5Z" fill="#085f8a"/></svg>
<div class="s" style="left:702px;top:500px;font-size:20.5px;line-height:27px;color:#fff;">refresh</div>
<div class="s" style="left:947px;top:500px;font-size:20.5px;line-height:27px;color:#fff;">1'h0</div>
<div class="s" style="left:1018px;top:500px;font-size:20.5px;line-height:27px;color:#fff;">Reg...</div>
<div class="s" style="left:1076px;top:500px;font-size:20.5px;line-height:27px;color:#fff;">Inter...</div>
<svg style="left:677px;top:503px" width="15" height="15" viewBox="0 0 15 15"><path d="M7.5 0L15 7.5L7.5 15L0 7.5Z" fill="#0c7fb8"/><path d="M7.5 2.5L12.5 7.5L7.5 12.5L2.5 7.5Z" fill="#1fc8f4"/><path d="M0 7.5L7.5 0L7.5 2.5L2.5 7.5Z" fill="#9ee8ff"/><path d="M7.5 15L15 7.5L12.5 7.5L7.5 12.5Z" fill="#085f8a"/></svg>
<div class="s" style="left:702px;top:532px;font-size:20.5px;line-height:27px;color:#fff;">show_pic_data</div>
<div class="s" style="left:947px;top:532px;font-size:20.5px;line-height:27px;color:#fff;">9'h199</div>
<div class="s" style="left:1018px;top:532px;font-size:20.5px;line-height:27px;color:#fff;">Pac...</div>
<div class="s" style="left:1076px;top:532px;font-size:20.5px;line-height:27px;color:#fff;">Inter...</div>
<svg style="left:677px;top:534px" width="15" height="15" viewBox="0 0 15 15"><path d="M7.5 0L15 7.5L7.5 15L0 7.5Z" fill="#0c7fb8"/><path d="M7.5 2.5L12.5 7.5L7.5 12.5L2.5 7.5Z" fill="#1fc8f4"/><path d="M0 7.5L7.5 0L7.5 2.5L2.5 7.5Z" fill="#9ee8ff"/><path d="M7.5 15L15 7.5L12.5 7.5L7.5 12.5Z" fill="#085f8a"/></svg>
<svg style="left:661px;top:537px" width="18" height="12"><rect x="0.5" y="0.5" width="10" height="10" fill="#f4f4f8" stroke="#999"/><path d="M3 5.5H8M5.5 3V8" stroke="#000" stroke-width="1.3"/><path d="M11 5.5H17" stroke="#bbb"/></svg>
<div class="s" style="left:702px;top:562px;font-size:20.5px;line-height:27px;color:#fff;">show_pic_done</div>
<div class="s" style="left:947px;top:562px;font-size:20.5px;line-height:27px;color:#fff;">1'h1</div>
<div class="s" style="left:1018px;top:562px;font-size:20.5px;line-height:27px;color:#fff;">Reg...</div>
<div class="s" style="left:1076px;top:562px;font-size:20.5px;line-height:27px;color:#fff;">Inter...</div>
<svg style="left:677px;top:566px" width="15" height="15" viewBox="0 0 15 15"><path d="M7.5 0L15 7.5L7.5 15L0 7.5Z" fill="#0c7fb8"/><path d="M7.5 2.5L12.5 7.5L7.5 12.5L2.5 7.5Z" fill="#1fc8f4"/><path d="M0 7.5L7.5 0L7.5 2.5L2.5 7.5Z" fill="#9ee8ff"/><path d="M7.5 15L15 7.5L12.5 7.5L7.5 12.5Z" fill="#085f8a"/></svg>
<div class="s" style="left:702px;top:594px;font-size:20.5px;line-height:27px;color:#fff;">show_pic_flag</div>
<div class="s" style="left:947px;top:594px;font-size:20.5px;line-height:27px;color:#fff;">1'h0</div>
<div class="s" style="left:1018px;top:594px;font-size:20.5px;line-height:27px;color:#fff;">Net</div>
<div class="s" style="left:1076px;top:594px;font-size:20.5px;line-height:27px;color:#fff;">Inter...</div>
<svg style="left:677px;top:597px" width="15" height="15" viewBox="0 0 15 15"><path d="M7.5 0L15 7.5L7.5 15L0 7.5Z" fill="#0c7fb8"/><path d="M7.5 2.5L12.5 7.5L7.5 12.5L2.5 7.5Z" fill="#1fc8f4"/><path d="M0 7.5L7.5 0L7.5 2.5L2.5 7.5Z" fill="#9ee8ff"/><path d="M7.5 15L15 7.5L12.5 7.5L7.5 12.5Z" fill="#085f8a"/></svg>
<div class="s" style="left:702px;top:624px;font-size:20.5px;line-height:27px;color:#fff;">SIM_TIME</div>
<div class="s" style="left:947px;top:624px;font-size:20.5px;line-height:27px;color:#fff;">32'h0...</div>
<div class="s" style="left:1018px;top:624px;font-size:20.5px;line-height:27px;color:#fff;">Par...</div>
<div class="s" style="left:1076px;top:624px;font-size:20.5px;line-height:27px;color:#fff;">Inter...</div>
<svg style="left:677px;top:628px" width="15" height="15" viewBox="0 0 15 15"><path d="M7.5 0L15 7.5L7.5 15L0 7.5Z" fill="#0c7fb8"/><path d="M7.5 2.5L12.5 7.5L7.5 12.5L2.5 7.5Z" fill="#1fc8f4"/><path d="M0 7.5L7.5 0L7.5 2.5L2.5 7.5Z" fill="#9ee8ff"/><path d="M7.5 15L15 7.5L12.5 7.5L7.5 12.5Z" fill="#085f8a"/></svg>
<div class="s" style="left:702px;top:656px;font-size:20.5px;line-height:27px;color:#000;">sys_clk</div>
<div class="s" style="left:947px;top:656px;font-size:20.5px;line-height:27px;color:#000;">1'h1</div>
<div class="s" style="left:1018px;top:656px;font-size:20.5px;line-height:27px;color:#000;">Reg...</div>
<div class="s" style="left:1076px;top:656px;font-size:20.5px;line-height:27px;color:#000;">Inter...</div>
<svg style="left:677px;top:659px" width="15" height="15" viewBox="0 0 15 15"><path d="M7.5 0L15 7.5L7.5 15L0 7.5Z" fill="#0c7fb8"/><path d="M7.5 2.5L12.5 7.5L7.5 12.5L2.5 7.5Z" fill="#1fc8f4"/><path d="M0 7.5L7.5 0L7.5 2.5L2.5 7.5Z" fill="#9ee8ff"/><path d="M7.5 15L15 7.5L12.5 7.5L7.5 12.5Z" fill="#085f8a"/></svg>
<div class="s" style="left:702px;top:688px;font-size:20.5px;line-height:27px;color:#000;">sys_rst_n</div>
<div class="s" style="left:947px;top:688px;font-size:20.5px;line-height:27px;color:#000;">1'h1</div>
<div class="s" style="left:1018px;top:688px;font-size:20.5px;line-height:27px;color:#000;">Reg...</div>
<div class="s" style="left:1076px;top:688px;font-size:20.5px;line-height:27px;color:#000;">Inter...</div>
<svg style="left:677px;top:690px" width="15" height="15" viewBox="0 0 15 15"><path d="M7.5 0L15 7.5L7.5 15L0 7.5Z" fill="#0c7fb8"/><path d="M7.5 2.5L12.5 7.5L7.5 12.5L2.5 7.5Z" fill="#1fc8f4"/><path d="M0 7.5L7.5 0L7.5 2.5L2.5 7.5Z" fill="#9ee8ff"/><path d="M7.5 15L15 7.5L12.5 7.5L7.5 12.5Z" fill="#085f8a"/></svg>
<div style="position:absolute;left:1197px;top:212px;width:1723px;height:1380px;background:#f0f0f0;border-left:1px solid #bbb"></div>
<div style="position:absolute;left:1197px;top:212px;width:1723px;height:30px;background:#99b4d1"></div>
<svg style="left:1200px;top:220px" width="16" height="15"><rect x="0.5" y="0.5" width="14" height="13" fill="#000" stroke="#ccc"/><rect x="0.5" y="0.5" width="14" height="3" fill="#ddd"/><path d="M2 9H5V6H8V10H12" stroke="#0f0" stroke-width="1.2" fill="none"/><path d="M2 12H13" stroke="#66f" stroke-width="1.2"/></svg>
<div class="s" style="left:1219px;top:214px;font-size:21px;line-height:27px;color:#000;">Wave - Default</div>
<div style="position:absolute;left:1365px;top:223px;width:1503px;height:3px;background:#d8f4ff"></div>
<div style="position:absolute;left:1365px;top:226px;width:1503px;height:2px;background:#000"></div>
<div style="position:absolute;left:1365px;top:228px;width:1503px;height:3px;background:#d8f4ff"></div>
<div style="position:absolute;left:1365px;top:231px;width:1503px;height:2px;background:#000"></div>
<div style="position:absolute;left:2104px;top:221px;width:26px;height:13px;background:#99b4d1"></div>
<svg style="left:0;top:223px" width="2964" height="10"><rect x="2108" y="0" width="1.6" height="1.6" fill="#223"/><rect x="2112" y="0" width="1.6" height="1.6" fill="#223"/><rect x="2116" y="0" width="1.6" height="1.6" fill="#223"/><rect x="2120" y="0" width="1.6" height="1.6" fill="#223"/><rect x="2124" y="0" width="1.6" height="1.6" fill="#223"/><rect x="2110" y="3" width="1.6" height="1.6" fill="#223"/><rect x="2114" y="3" width="1.6" height="1.6" fill="#223"/><rect x="2118" y="3" width="1.6" height="1.6" fill="#223"/><rect x="2122" y="3" width="1.6" height="1.6" fill="#223"/><rect x="2108" y="6" width="1.6" height="1.6" fill="#223"/><rect x="2112" y="6" width="1.6" height="1.6" fill="#223"/><rect x="2116" y="6" width="1.6" height="1.6" fill="#223"/><rect x="2120" y="6" width="1.6" height="1.6" fill="#223"/><rect x="2124" y="6" width="1.6" height="1.6" fill="#223"/></svg>
<div style="position:absolute;left:2872px;top:220px;width:13px;height:13px;background:#f0f0f0;border-right:1px solid #888;border-bottom:1px solid #888;border-top:1px solid #fff;border-left:1px solid #fff"></div>
<svg style="left:2873px;top:221px" width="12" height="13"><path d="M6 1.5V11.5M1 6.5H11" stroke="#000" stroke-width="2.4"/></svg>
<div style="position:absolute;left:2888px;top:220px;width:13px;height:13px;background:#f0f0f0;border-right:1px solid #888;border-bottom:1px solid #888;border-top:1px solid #fff;border-left:1px solid #fff"></div>
<svg style="left:2889px;top:221px" width="12" height="13"><rect x="1.5" y="5.5" width="5" height="5" fill="none" stroke="#000" stroke-width="1.6"/><path d="M4 8 L10 2 M6 2H10V6" stroke="#000" stroke-width="1.6" fill="none"/></svg>
<div style="position:absolute;left:2904px;top:220px;width:13px;height:13px;background:#f0f0f0;border-right:1px solid #888;border-bottom:1px solid #888;border-top:1px solid #fff;border-left:1px solid #fff"></div>
<svg style="left:2905px;top:221px" width="12" height="13"><path d="M1.5 1.5L10.5 10.5M10.5 1.5L1.5 10.5" stroke="#000" stroke-width="1.8"/></svg>
<div style="position:absolute;left:1199px;top:243px;width:262px;height:1349px;background:#808080"></div>
<div style="position:absolute;left:1199px;top:265px;width:9px;height:1217px;background:#fff"></div>
<div style="position:absolute;left:1358px;top:243px;width:3px;height:1349px;background:#f0f0f0"></div>
<div style="position:absolute;left:1461px;top:243px;width:3px;height:1349px;background:#f0f0f0"></div>
<div style="position:absolute;left:1199px;top:262px;width:262px;height:3px;background:#f0f0f0"></div>
<div style="position:absolute;left:1208px;top:265px;width:253px;height:3px;background:#808080"></div>
<div style="position:absolute;left:1208px;top:268px;width:253px;height:63px;background:#fff"></div>
<div style="position:absolute;left:1208px;top:299px;width:253px;height:2px;background:#a0a0a0"></div>
<div style="position:absolute;left:1358px;top:243px;width:3px;height:1239px;background:#f0f0f0"></div>
<svg style="left:1210px;top:246px" width="30" height="16"><path d="M2 6L6 2L10 6L6 10Z" fill="#b020e0"/><rect x="9" y="6" width="7" height="7" fill="#20b040"/><path d="M0 11L5 6L10 11L5 16Z" fill="#1050f0"/><circle cx="11" cy="7" r="3" fill="#10e0f0"/><path d="M20 10H27L23.5 14Z" fill="#000"/></svg>
<div class="s" style="right:1508px;top:240px;font-size:21px;line-height:27px;color:#fff;">Msgs</div>
<div class="s" style="left:1253px;top:274px;font-size:21px;line-height:27px;color:#000;">/tb_contr...</div>
<div class="s" style="left:1364px;top:274px;font-size:21px;line-height:27px;color:#000;">1'h1</div>
<svg style="left:1228px;top:276px" width="15" height="15" viewBox="0 0 15 15"><path d="M7.5 0L15 7.5L7.5 15L0 7.5Z" fill="#0c7fb8"/><path d="M7.5 2.5L12.5 7.5L7.5 12.5L2.5 7.5Z" fill="#1fc8f4"/><path d="M0 7.5L7.5 0L7.5 2.5L2.5 7.5Z" fill="#9ee8ff"/><path d="M7.5 15L15 7.5L12.5 7.5L7.5 12.5Z" fill="#085f8a"/></svg>
<div class="s" style="left:1253px;top:306px;font-size:21px;line-height:27px;color:#000;">/tb_contr...</div>
<div class="s" style="left:1364px;top:306px;font-size:21px;line-height:27px;color:#000;">1'h1</div>
<svg style="left:1228px;top:308px" width="15" height="15" viewBox="0 0 15 15"><path d="M7.5 0L15 7.5L7.5 15L0 7.5Z" fill="#0c7fb8"/><path d="M7.5 2.5L12.5 7.5L7.5 12.5L2.5 7.5Z" fill="#1fc8f4"/><path d="M0 7.5L7.5 0L7.5 2.5L2.5 7.5Z" fill="#9ee8ff"/><path d="M7.5 15L15 7.5L12.5 7.5L7.5 12.5Z" fill="#085f8a"/></svg>
<div class="s" style="left:1253px;top:338px;font-size:21px;line-height:27px;color:#fff;">/tb_contr...</div>
<div class="s" style="left:1364px;top:338px;font-size:21px;line-height:27px;color:#fff;">9'h199</div>
<svg style="left:1228px;top:340px" width="15" height="15" viewBox="0 0 15 15"><path d="M7.5 0L15 7.5L7.5 15L0 7.5Z" fill="#0c7fb8"/><path d="M7.5 2.5L12.5 7.5L7.5 12.5L2.5 7.5Z" fill="#1fc8f4"/><path d="M0 7.5L7.5 0L7.5 2.5L2.5 7.5Z" fill="#9ee8ff"/><path d="M7.5 15L15 7.5L12.5 7.5L7.5 12.5Z" fill="#085f8a"/></svg>
<svg style="left:1213px;top:341px" width="18" height="12"><rect x="0.5" y="0.5" width="10" height="10" fill="#f4f4f8" stroke="#999"/><path d="M3 5.5H8M5.5 3V8" stroke="#000" stroke-width="1.3"/><path d="M11 5.5H17" stroke="#bbb"/></svg>
<div class="s" style="left:1253px;top:370px;font-size:21px;line-height:27px;color:#fff;">/tb_contr...</div>
<div class="s" style="left:1364px;top:370px;font-size:21px;line-height:27px;color:#fff;">1'h0</div>
<svg style="left:1228px;top:372px" width="15" height="15" viewBox="0 0 15 15"><path d="M7.5 0L15 7.5L7.5 15L0 7.5Z" fill="#0c7fb8"/><path d="M7.5 2.5L12.5 7.5L7.5 12.5L2.5 7.5Z" fill="#1fc8f4"/><path d="M0 7.5L7.5 0L7.5 2.5L2.5 7.5Z" fill="#9ee8ff"/><path d="M7.5 15L15 7.5L12.5 7.5L7.5 12.5Z" fill="#085f8a"/></svg>
<div class="s" style="left:1253px;top:402px;font-size:21px;line-height:27px;color:#fff;">/tb_contr...</div>
<div class="s" style="left:1364px;top:402px;font-size:21px;line-height:27px;color:#fff;">1'h0</div>
<svg style="left:1228px;top:404px" width="15" height="15" viewBox="0 0 15 15"><path d="M7.5 0L15 7.5L7.5 15L0 7.5Z" fill="#0c7fb8"/><path d="M7.5 2.5L12.5 7.5L7.5 12.5L2.5 7.5Z" fill="#1fc8f4"/><path d="M0 7.5L7.5 0L7.5 2.5L2.5 7.5Z" fill="#9ee8ff"/><path d="M7.5 15L15 7.5L12.5 7.5L7.5 12.5Z" fill="#085f8a"/></svg>
<div class="s" style="left:1253px;top:434px;font-size:21px;line-height:27px;color:#fff;">/tb_contr...</div>
<div class="s" style="left:1364px;top:434px;font-size:21px;line-height:27px;color:#fff;">1'h0</div>
<svg style="left:1228px;top:436px" width="15" height="15" viewBox="0 0 15 15"><path d="M7.5 0L15 7.5L7.5 15L0 7.5Z" fill="#0c7fb8"/><path d="M7.5 2.5L12.5 7.5L7.5 12.5L2.5 7.5Z" fill="#1fc8f4"/><path d="M0 7.5L7.5 0L7.5 2.5L2.5 7.5Z" fill="#9ee8ff"/><path d="M7.5 15L15 7.5L12.5 7.5L7.5 12.5Z" fill="#085f8a"/></svg>
<div class="s" style="left:1253px;top:466px;font-size:21px;line-height:27px;color:#fff;">/tb_contr...</div>
<div class="s" style="left:1364px;top:466px;font-size:21px;line-height:27px;color:#fff;">9'h155</div>
<svg style="left:1228px;top:468px" width="15" height="15" viewBox="0 0 15 15"><path d="M7.5 0L15 7.5L7.5 15L0 7.5Z" fill="#0c7fb8"/><path d="M7.5 2.5L12.5 7.5L7.5 12.5L2.5 7.5Z" fill="#1fc8f4"/><path d="M0 7.5L7.5 0L7.5 2.5L2.5 7.5Z" fill="#9ee8ff"/><path d="M7.5 15L15 7.5L12.5 7.5L7.5 12.5Z" fill="#085f8a"/></svg>
<svg style="left:1213px;top:469px" width="18" height="12"><rect x="0.5" y="0.5" width="10" height="10" fill="#f4f4f8" stroke="#999"/><path d="M3 5.5H8M5.5 3V8" stroke="#000" stroke-width="1.3"/><path d="M11 5.5H17" stroke="#bbb"/></svg>
<div class="s" style="left:1253px;top:498px;font-size:21px;line-height:27px;color:#fff;">/tb_contr...</div>
<div class="s" style="left:1364px;top:498px;font-size:21px;line-height:27px;color:#fff;">1'h1</div>
<svg style="left:1228px;top:500px" width="15" height="15" viewBox="0 0 15 15"><path d="M7.5 0L15 7.5L7.5 15L0 7.5Z" fill="#0c7fb8"/><path d="M7.5 2.5L12.5 7.5L7.5 12.5L2.5 7.5Z" fill="#1fc8f4"/><path d="M0 7.5L7.5 0L7.5 2.5L2.5 7.5Z" fill="#9ee8ff"/><path d="M7.5 15L15 7.5L12.5 7.5L7.5 12.5Z" fill="#085f8a"/></svg>
<div class="s" style="left:1253px;top:530px;font-size:21px;line-height:27px;color:#fff;">/tb_contr...</div>
<div class="s" style="left:1364px;top:530px;font-size:21px;line-height:27px;color:#fff;">1'h0</div>
<svg style="left:1228px;top:532px" width="15" height="15" viewBox="0 0 15 15"><path d="M7.5 0L15 7.5L7.5 15L0 7.5Z" fill="#0c7fb8"/><path d="M7.5 2.5L12.5 7.5L7.5 12.5L2.5 7.5Z" fill="#1fc8f4"/><path d="M0 7.5L7.5 0L7.5 2.5L2.5 7.5Z" fill="#9ee8ff"/><path d="M7.5 15L15 7.5L12.5 7.5L7.5 12.5Z" fill="#085f8a"/></svg>
<div class="s" style="left:1253px;top:562px;font-size:21px;line-height:27px;color:#fff;">/tb_contr...</div>
<div class="s" style="left:1364px;top:562px;font-size:21px;line-height:27px;color:#fff;">9'h199</div>
<svg style="left:1228px;top:564px" width="15" height="15" viewBox="0 0 15 15"><path d="M7.5 0L15 7.5L7.5 15L0 7.5Z" fill="#0c7fb8"/><path d="M7.5 2.5L12.5 7.5L7.5 12.5L2.5 7.5Z" fill="#1fc8f4"/><path d="M0 7.5L7.5 0L7.5 2.5L2.5 7.5Z" fill="#9ee8ff"/><path d="M7.5 15L15 7.5L12.5 7.5L7.5 12.5Z" fill="#085f8a"/></svg>
<svg style="left:1213px;top:565px" width="18" height="12"><rect x="0.5" y="0.5" width="10" height="10" fill="#f4f4f8" stroke="#999"/><path d="M3 5.5H8M5.5 3V8" stroke="#000" stroke-width="1.3"/><path d="M11 5.5H17" stroke="#bbb"/></svg>
<div class="s" style="left:1253px;top:594px;font-size:21px;line-height:27px;color:#fff;">/tb_contr...</div>
<div class="s" style="left:1364px;top:594px;font-size:21px;line-height:27px;color:#fff;">1'h1</div>
<svg style="left:1228px;top:596px" width="15" height="15" viewBox="0 0 15 15"><path d="M7.5 0L15 7.5L7.5 15L0 7.5Z" fill="#0c7fb8"/><path d="M7.5 2.5L12.5 7.5L7.5 12.5L2.5 7.5Z" fill="#1fc8f4"/><path d="M0 7.5L7.5 0L7.5 2.5L2.5 7.5Z" fill="#9ee8ff"/><path d="M7.5 15L15 7.5L12.5 7.5L7.5 12.5Z" fill="#085f8a"/></svg>
<div class="s" style="left:1253px;top:626px;font-size:21px;line-height:27px;color:#fff;">/tb_contr...</div>
<div class="s" style="left:1364px;top:626px;font-size:21px;line-height:27px;color:#fff;">1'h0</div>
<svg style="left:1228px;top:628px" width="15" height="15" viewBox="0 0 15 15"><path d="M7.5 0L15 7.5L7.5 15L0 7.5Z" fill="#0c7fb8"/><path d="M7.5 2.5L12.5 7.5L7.5 12.5L2.5 7.5Z" fill="#1fc8f4"/><path d="M0 7.5L7.5 0L7.5 2.5L2.5 7.5Z" fill="#9ee8ff"/><path d="M7.5 15L15 7.5L12.5 7.5L7.5 12.5Z" fill="#085f8a"/></svg>
<div class="s" style="left:1253px;top:658px;font-size:21px;line-height:27px;color:#fff;">/tb_contr...</div>
<div class="s" style="left:1364px;top:658px;font-size:21px;line-height:27px;color:#fff;">32'h000...</div>
<svg style="left:1228px;top:660px" width="15" height="15" viewBox="0 0 15 15"><path d="M7.5 0L15 7.5L7.5 15L0 7.5Z" fill="#0c7fb8"/><path d="M7.5 2.5L12.5 7.5L7.5 12.5L2.5 7.5Z" fill="#1fc8f4"/><path d="M0 7.5L7.5 0L7.5 2.5L2.5 7.5Z" fill="#9ee8ff"/><path d="M7.5 15L15 7.5L12.5 7.5L7.5 12.5Z" fill="#085f8a"/></svg>
<div style="position:absolute;left:1212px;top:683px;width:142px;height:2px;background:#000"></div>
<div style="position:absolute;left:1363px;top:683px;width:94px;height:2px;background:#000"></div>
<svg style="left:1209px;top:679px" width="6" height="10"><path d="M0.5 0.5V9.5L5 5Z" fill="#888" stroke="#000"/></svg>
<div style="position:absolute;left:1464px;top:243px;width:1434px;height:1237px;background:#000"></div>
<div style="position:absolute;left:1464px;top:262px;width:1434px;height:3px;background:#f0f0f0"></div>
<svg style="left:0px;top:0px" width="2964" height="1924"><line x1="1552.5" y1="265" x2="1552.5" y2="1480" stroke="#8a8a8a" stroke-width="1.2"/><line x1="1637.5" y1="265" x2="1637.5" y2="1480" stroke="#8a8a8a" stroke-width="1.2"/><line x1="1722.5" y1="265" x2="1722.5" y2="1480" stroke="#8a8a8a" stroke-width="1.2"/><line x1="1807.5" y1="265" x2="1807.5" y2="1480" stroke="#8a8a8a" stroke-width="1.2"/><line x1="1892.5" y1="265" x2="1892.5" y2="1480" stroke="#8a8a8a" stroke-width="1.2"/><line x1="1977.5" y1="265" x2="1977.5" y2="1480" stroke="#8a8a8a" stroke-width="1.2"/><line x1="2062.5" y1="265" x2="2062.5" y2="1480" stroke="#8a8a8a" stroke-width="1.2"/><line x1="2147.5" y1="265" x2="2147.5" y2="1480" stroke="#8a8a8a" stroke-width="1.2"/><line x1="2232.5" y1="265" x2="2232.5" y2="1480" stroke="#8a8a8a" stroke-width="1.2"/><line x1="2317.5" y1="265" x2="2317.5" y2="1480" stroke="#8a8a8a" stroke-width="1.2"/><line x1="2402.5" y1="265" x2="2402.5" y2="1480" stroke="#8a8a8a" stroke-width="1.2"/><line x1="2487.5" y1="265" x2="2487.5" y2="1480" stroke="#8a8a8a" stroke-width="1.2"/><line x1="2572.5" y1="265" x2="2572.5" y2="1480" stroke="#8a8a8a" stroke-width="1.2"/><line x1="2657.5" y1="265" x2="2657.5" y2="1480" stroke="#8a8a8a" stroke-width="1.2"/><line x1="2742.5" y1="265" x2="2742.5" y2="1480" stroke="#8a8a8a" stroke-width="1.2"/><line x1="2827.5" y1="265" x2="2827.5" y2="1480" stroke="#8a8a8a" stroke-width="1.2"/><line x1="1467.5" y1="244" x2="1467.5" y2="262" stroke="#80b080" stroke-width="1.4"/><line x1="1467.5" y1="266" x2="1467.5" y2="1480" stroke="#80b080" stroke-width="1.4"/><line x1="1467.5" y1="283.2" x2="1467.67" y2="283.2" stroke="#ff1010" stroke-width="1.7"/><line x1="1467.5" y1="283.2" x2="1467.5" y2="296.6" stroke="#2ef02e" stroke-width="1.7"/><line x1="1467.5" y1="296.6" x2="1552.5" y2="296.6" stroke="#2ef02e" stroke-width="1.7"/><line x1="1552.5" y1="270.6" x2="1552.5" y2="296.6" stroke="#2ef02e" stroke-width="1.7"/><line x1="1552.5" y1="270.6" x2="1637.5" y2="270.6" stroke="#2ef02e" stroke-width="1.7"/><line x1="1637.5" y1="270.6" x2="1637.5" y2="296.6" stroke="#2ef02e" stroke-width="1.7"/><line x1="1637.5" y1="296.6" x2="1722.5" y2="296.6" stroke="#2ef02e" stroke-width="1.7"/><line x1="1722.5" y1="270.6" x2="1722.5" y2="296.6" stroke="#2ef02e" stroke-width="1.7"/><line x1="1722.5" y1="270.6" x2="1807.5" y2="270.6" stroke="#2ef02e" stroke-width="1.7"/><line x1="1807.5" y1="270.6" x2="1807.5" y2="296.6" stroke="#2ef02e" stroke-width="1.7"/><line x1="1807.5" y1="296.6" x2="1892.5" y2="296.6" stroke="#2ef02e" stroke-width="1.7"/><line x1="1892.5" y1="270.6" x2="1892.5" y2="296.6" stroke="#2ef02e" stroke-width="1.7"/><line x1="1892.5" y1="270.6" x2="1977.5" y2="270.6" stroke="#2ef02e" stroke-width="1.7"/><line x1="1977.5" y1="270.6" x2="1977.5" y2="296.6" stroke="#2ef02e" stroke-width="1.7"/><line x1="1977.5" y1="296.6" x2="2062.5" y2="296.6" stroke="#2ef02e" stroke-width="1.7"/><line x1="2062.5" y1="270.6" x2="2062.5" y2="296.6" stroke="#2ef02e" stroke-width="1.7"/><line x1="2062.5" y1="270.6" x2="2147.5" y2="270.6" stroke="#2ef02e" stroke-width="1.7"/><line x1="2147.5" y1="270.6" x2="2147.5" y2="296.6" stroke="#2ef02e" stroke-width="1.7"/><line x1="2147.5" y1="296.6" x2="2232.5" y2="296.6" stroke="#2ef02e" stroke-width="1.7"/><line x1="2232.5" y1="270.6" x2="2232.5" y2="296.6" stroke="#2ef02e" stroke-width="1.7"/><line x1="2232.5" y1="270.6" x2="2317.5" y2="270.6" stroke="#2ef02e" stroke-width="1.7"/><line x1="2317.5" y1="270.6" x2="2317.5" y2="296.6" stroke="#2ef02e" stroke-width="1.7"/><line x1="2317.5" y1="296.6" x2="2402.5" y2="296.6" stroke="#2ef02e" stroke-width="1.7"/><line x1="2402.5" y1="270.6" x2="2402.5" y2="296.6" stroke="#2ef02e" stroke-width="1.7"/><line x1="2402.5" y1="270.6" x2="2487.5" y2="270.6" stroke="#2ef02e" stroke-width="1.7"/><line x1="2487.5" y1="270.6" x2="2487.5" y2="296.6" stroke="#2ef02e" stroke-width="1.7"/><line x1="2487.5" y1="296.6" x2="2572.5" y2="296.6" stroke="#2ef02e" stroke-width="1.7"/><line x1="2572.5" y1="270.6" x2="2572.5" y2="296.6" stroke="#2ef02e" stroke-width="1.7"/><line x1="2572.5" y1="270.6" x2="2657.5" y2="270.6" stroke="#2ef02e" stroke-width="1.7"/><line x1="2657.5" y1="270.6" x2="2657.5" y2="296.6" stroke="#2ef02e" stroke-width="1.7"/><line x1="2657.5" y1="296.6" x2="2742.5" y2="296.6" stroke="#2ef02e" stroke-width="1.7"/><line x1="2742.5" y1="270.6" x2="2742.5" y2="296.6" stroke="#2ef02e" stroke-width="1.7"/><line x1="2742.5" y1="270.6" x2="2827.5" y2="270.6" stroke="#2ef02e" stroke-width="1.7"/><line x1="1467.5" y1="302.6" x2="2827.5" y2="302.6" stroke="#2ef02e" stroke-width="1.7"/><line x1="1467.5" y1="347.2" x2="1552.5" y2="347.2" stroke="#ff1010" stroke-width="1.7"/><line x1="1553.5" y1="333.8" x2="1892.5" y2="333.8" stroke="#a8f0a8" stroke-width="1.5"/><line x1="1553.5" y1="360.4" x2="1892.5" y2="360.4" stroke="#a8f0a8" stroke-width="1.5"/><path d="M1553.5 333.8 V340.8 L1552.0 342.8 V351.4 L1553.5 353.4 V360.4" stroke="#a8f0a8" stroke-width="1.6" fill="none"/><text x="1557.5" y="356.5" fill="#fff" font-family="Liberation Sans" font-size="21">000</text><line x1="1893.5" y1="333.8" x2="2062.5" y2="333.8" stroke="#a8f0a8" stroke-width="1.5"/><line x1="1893.5" y1="360.4" x2="2062.5" y2="360.4" stroke="#a8f0a8" stroke-width="1.5"/><path d="M1893.5 333.8 V340.8 L1892.0 342.8 V351.4 L1893.5 353.4 V360.4" stroke="#a8f0a8" stroke-width="1.6" fill="none"/><text x="1897.5" y="356.5" fill="#fff" font-family="Liberation Sans" font-size="21">155</text><line x1="2063.5" y1="333.8" x2="2402.5" y2="333.8" stroke="#a8f0a8" stroke-width="1.5"/><line x1="2063.5" y1="360.4" x2="2402.5" y2="360.4" stroke="#a8f0a8" stroke-width="1.5"/><path d="M2063.5 333.8 V340.8 L2062.0 342.8 V351.4 L2063.5 353.4 V360.4" stroke="#a8f0a8" stroke-width="1.6" fill="none"/><text x="2067.5" y="356.5" fill="#fff" font-family="Liberation Sans" font-size="21">000</text><line x1="2403.5" y1="333.8" x2="2827.5" y2="333.8" stroke="#a8f0a8" stroke-width="1.5"/><line x1="2403.5" y1="360.4" x2="2827.5" y2="360.4" stroke="#a8f0a8" stroke-width="1.5"/><path d="M2403.5 333.8 V340.8 L2402.0 342.8 V351.4 L2403.5 353.4 V360.4" stroke="#a8f0a8" stroke-width="1.6" fill="none"/><text x="2407.5" y="356.5" fill="#fff" font-family="Liberation Sans" font-size="21">199</text><line x1="1467.5" y1="379.2" x2="1552.5" y2="379.2" stroke="#ff1010" stroke-width="1.7"/><line x1="1552.5" y1="379.2" x2="1552.5" y2="392.6" stroke="#2ef02e" stroke-width="1.7"/><line x1="1552.5" y1="392.6" x2="1892.5" y2="392.6" stroke="#2ef02e" stroke-width="1.7"/><line x1="1892.5" y1="366.6" x2="1892.5" y2="392.6" stroke="#2ef02e" stroke-width="1.7"/><line x1="1892.5" y1="366.6" x2="2062.5" y2="366.6" stroke="#2ef02e" stroke-width="1.7"/><line x1="2062.5" y1="366.6" x2="2062.5" y2="392.6" stroke="#2ef02e" stroke-width="1.7"/><line x1="2062.5" y1="392.6" x2="2402.5" y2="392.6" stroke="#2ef02e" stroke-width="1.7"/><line x1="2402.5" y1="366.6" x2="2402.5" y2="392.6" stroke="#2ef02e" stroke-width="1.7"/><line x1="2402.5" y1="366.6" x2="2572.5" y2="366.6" stroke="#2ef02e" stroke-width="1.7"/><line x1="2572.5" y1="366.6" x2="2572.5" y2="392.6" stroke="#2ef02e" stroke-width="1.7"/><line x1="2572.5" y1="392.6" x2="2827.5" y2="392.6" stroke="#2ef02e" stroke-width="1.7"/><line x1="1467.5" y1="424.6" x2="1807.5" y2="424.6" stroke="#2ef02e" stroke-width="1.7"/><line x1="1807.5" y1="398.6" x2="1807.5" y2="424.6" stroke="#2ef02e" stroke-width="1.7"/><line x1="1807.5" y1="398.6" x2="1977.5" y2="398.6" stroke="#2ef02e" stroke-width="1.7"/><line x1="1977.5" y1="398.6" x2="1977.5" y2="424.6" stroke="#2ef02e" stroke-width="1.7"/><line x1="1977.5" y1="424.6" x2="2827.5" y2="424.6" stroke="#2ef02e" stroke-width="1.7"/><line x1="1467.5" y1="456.6" x2="2317.5" y2="456.6" stroke="#2ef02e" stroke-width="1.7"/><line x1="2317.5" y1="430.6" x2="2317.5" y2="456.6" stroke="#2ef02e" stroke-width="1.7"/><line x1="2317.5" y1="430.6" x2="2487.5" y2="430.6" stroke="#2ef02e" stroke-width="1.7"/><line x1="2487.5" y1="430.6" x2="2487.5" y2="456.6" stroke="#2ef02e" stroke-width="1.7"/><line x1="2487.5" y1="456.6" x2="2827.5" y2="456.6" stroke="#2ef02e" stroke-width="1.7"/><line x1="1468.5" y1="461.8" x2="1807.5" y2="461.8" stroke="#a8f0a8" stroke-width="1.5"/><line x1="1468.5" y1="488.4" x2="1807.5" y2="488.4" stroke="#a8f0a8" stroke-width="1.5"/><path d="M1468.5 461.8 V468.8 L1467.0 470.8 V479.4 L1468.5 481.4 V488.4" stroke="#a8f0a8" stroke-width="1.6" fill="none"/><text x="1472.5" y="484.5" fill="#fff" font-family="Liberation Sans" font-size="21">000</text><line x1="1808.5" y1="461.8" x2="2827.5" y2="461.8" stroke="#a8f0a8" stroke-width="1.5"/><line x1="1808.5" y1="488.4" x2="2827.5" y2="488.4" stroke="#a8f0a8" stroke-width="1.5"/><path d="M1808.5 461.8 V468.8 L1807.0 470.8 V479.4 L1808.5 481.4 V488.4" stroke="#a8f0a8" stroke-width="1.6" fill="none"/><text x="1812.5" y="484.5" fill="#fff" font-family="Liberation Sans" font-size="21">155</text><line x1="1467.5" y1="520.6" x2="1977.5" y2="520.6" stroke="#2ef02e" stroke-width="1.7"/><line x1="1977.5" y1="494.6" x2="1977.5" y2="520.6" stroke="#2ef02e" stroke-width="1.7"/><line x1="1977.5" y1="494.6" x2="2827.5" y2="494.6" stroke="#2ef02e" stroke-width="1.7"/><line x1="1467.5" y1="552.6" x2="2827.5" y2="552.6" stroke="#2ef02e" stroke-width="1.7"/><line x1="1468.5" y1="557.8" x2="2317.5" y2="557.8" stroke="#a8f0a8" stroke-width="1.5"/><line x1="1468.5" y1="584.4" x2="2317.5" y2="584.4" stroke="#a8f0a8" stroke-width="1.5"/><path d="M1468.5 557.8 V564.8 L1467.0 566.8 V575.4 L1468.5 577.4 V584.4" stroke="#a8f0a8" stroke-width="1.6" fill="none"/><text x="1472.5" y="580.5" fill="#fff" font-family="Liberation Sans" font-size="21">000</text><line x1="2318.5" y1="557.8" x2="2827.5" y2="557.8" stroke="#a8f0a8" stroke-width="1.5"/><line x1="2318.5" y1="584.4" x2="2827.5" y2="584.4" stroke="#a8f0a8" stroke-width="1.5"/><path d="M2318.5 557.8 V564.8 L2317.0 566.8 V575.4 L2318.5 577.4 V584.4" stroke="#a8f0a8" stroke-width="1.6" fill="none"/><text x="2322.5" y="580.5" fill="#fff" font-family="Liberation Sans" font-size="21">199</text><line x1="1467.5" y1="616.6" x2="2487.5" y2="616.6" stroke="#2ef02e" stroke-width="1.7"/><line x1="2487.5" y1="590.6" x2="2487.5" y2="616.6" stroke="#2ef02e" stroke-width="1.7"/><line x1="2487.5" y1="590.6" x2="2827.5" y2="590.6" stroke="#2ef02e" stroke-width="1.7"/><line x1="1467.5" y1="635.2" x2="1552.5" y2="635.2" stroke="#ff1010" stroke-width="1.7"/><line x1="1552.5" y1="635.2" x2="1552.5" y2="648.6" stroke="#2ef02e" stroke-width="1.7"/><line x1="1552.5" y1="648.6" x2="2827.5" y2="648.6" stroke="#2ef02e" stroke-width="1.7"/><line x1="1468.5" y1="653.8" x2="2827.5" y2="653.8" stroke="#a8f0a8" stroke-width="1.5"/><line x1="1468.5" y1="680.4" x2="2827.5" y2="680.4" stroke="#a8f0a8" stroke-width="1.5"/><path d="M1468.5 653.8 V660.8 L1467.0 662.8 V671.4 L1468.5 673.4 V680.4" stroke="#a8f0a8" stroke-width="1.6" fill="none"/><text x="1472.5" y="676.5" fill="#fff" font-family="Liberation Sans" font-size="21">00000064</text><line x1="1467.5" y1="276" x2="1467.5" y2="292" stroke="#c05060" stroke-width="1.4"/><line x1="1467.5" y1="308" x2="1467.5" y2="324" stroke="#c05060" stroke-width="1.4"/><line x1="1467.5" y1="372" x2="1467.5" y2="388" stroke="#c05060" stroke-width="1.4"/><line x1="1467.5" y1="404" x2="1467.5" y2="420" stroke="#c05060" stroke-width="1.4"/><line x1="1467.5" y1="436" x2="1467.5" y2="452" stroke="#c05060" stroke-width="1.4"/><line x1="1467.5" y1="500" x2="1467.5" y2="516" stroke="#c05060" stroke-width="1.4"/><line x1="1467.5" y1="532" x2="1467.5" y2="548" stroke="#c05060" stroke-width="1.4"/><line x1="1467.5" y1="596" x2="1467.5" y2="612" stroke="#c05060" stroke-width="1.4"/><line x1="1467.5" y1="628" x2="1467.5" y2="644" stroke="#c05060" stroke-width="1.4"/></svg>
<div style="position:absolute;left:2898px;top:243px;width:22px;height:1349px;background:#f0f0f0;border-left:2px solid #ddd"></div>
<div style="position:absolute;left:2901px;top:244px;width:17px;height:18px;background:#808080"></div>
<div style="position:absolute;left:2902px;top:266px;width:15px;height:15px;background:#f0f0f0;border-right:2px solid #a0a0a0;border-bottom:2px solid #a0a0a0;border-top:1px solid #fff;border-left:1px solid #fff"></div>
<svg style="left:2905px;top:271px" width="10" height="6"><path d="M0 5H9L4.5 0Z" fill="#000"/></svg>
<div style="position:absolute;left:2902px;top:283px;width:15px;height:1179px;background:#efefef"></div>
<div style="position:absolute;left:2902px;top:282px;width:14px;height:63px;background:#fff"></div>
<div style="position:absolute;left:2898px;top:243px;width:3px;height:1349px;background:#fff"></div>
<div style="position:absolute;left:2901px;top:265px;width:1px;height:1215px;background:#909090"></div>
<div style="position:absolute;left:2915.5px;top:282px;width:1.5px;height:1180px;background:#909090"></div>
<div style="position:absolute;left:2917px;top:243px;width:3px;height:1349px;background:#fff"></div>
<div style="position:absolute;left:2920px;top:212px;width:2px;height:1380px;background:#a0a0a0"></div>
<div style="position:absolute;left:2902px;top:1463px;width:15px;height:15px;background:#f0f0f0;border-right:2px solid #a0a0a0;border-bottom:2px solid #a0a0a0;border-top:1px solid #fff;border-left:1px solid #fff"></div>
<svg style="left:2905px;top:1468px" width="10" height="6"><path d="M0 0H9L4.5 5Z" fill="#000"/></svg>
<div style="position:absolute;left:2900px;top:1483px;width:18px;height:108px;background:#808080"></div>
<div style="position:absolute;left:1199px;top:1480px;width:1699px;height:3px;background:#f0f0f0"></div>
<div style="position:absolute;left:1199px;top:1483px;width:159px;height:69px;background:#808080"></div>
<div style="position:absolute;left:1244px;top:1483px;width:114px;height:37px;background:#fff"></div>
<div style="position:absolute;left:1361px;top:1483px;width:100px;height:37px;background:#fff"></div>
<div style="position:absolute;left:1361px;top:1520px;width:100px;height:32px;background:#808080"></div>
<div class="s" style="right:1615px;top:1488px;font-size:21px;line-height:27px;color:#000;">Now</div>
<div class="s" style="right:1512px;top:1488px;font-size:21px;line-height:27px;color:#000;">80 ns</div>
<div class="s" style="right:1616px;top:1524px;font-size:21px;line-height:27px;color:#fff;">Cursor 1</div>
<div class="s" style="right:1512px;top:1524px;font-size:21px;line-height:27px;color:#fff;">0 ns</div>
<svg style="left:1208px;top:1494px" width="36" height="18"><path d="M2 14L7 4L10 10" stroke="#666" stroke-width="2" fill="none"/><path d="M1 15H12" stroke="#36c" stroke-width="1.5"/><rect x="13" y="4" width="11" height="10" fill="#7aa8e0" stroke="#345"/><circle cx="30" cy="9" r="5" fill="#4c4"/><path d="M27.5 9H32.5M30 6.5V11.5" stroke="#fff" stroke-width="1.5"/></svg>
<svg style="left:1210px;top:1530px" width="48" height="18"><rect x="2" y="8" width="10" height="9" fill="#e8c050"/><path d="M4 8V5A3 3 0 0 1 10 5" stroke="#999" stroke-width="1.5" fill="none"/><path d="M15 15L22 6" stroke="#7aa0d0" stroke-width="3"/><circle cx="23" cy="5" r="2.5" fill="none" stroke="#7aa0d0" stroke-width="1.5"/><circle cx="33" cy="8" r="5" fill="#e04040"/><path d="M30.5 8H35.5" stroke="#fff" stroke-width="1.5"/></svg>
<div style="position:absolute;left:1464px;top:1483px;width:1434px;height:69px;background:#000"></div>
<svg style="left:0px;top:0px" width="2964" height="1924"><line x1="1467.5" y1="1483" x2="1467.5" y2="1490" stroke="#2ef02e" stroke-width="1.6"/><line x1="1484.5" y1="1486" x2="1484.5" y2="1490" stroke="#2ef02e" stroke-width="1.6"/><line x1="1501.5" y1="1486" x2="1501.5" y2="1490" stroke="#2ef02e" stroke-width="1.6"/><line x1="1518.5" y1="1486" x2="1518.5" y2="1490" stroke="#2ef02e" stroke-width="1.6"/><line x1="1535.5" y1="1486" x2="1535.5" y2="1490" stroke="#2ef02e" stroke-width="1.6"/><line x1="1552.5" y1="1483" x2="1552.5" y2="1490" stroke="#2ef02e" stroke-width="1.6"/><line x1="1569.5" y1="1486" x2="1569.5" y2="1490" stroke="#2ef02e" stroke-width="1.6"/><line x1="1586.5" y1="1486" x2="1586.5" y2="1490" stroke="#2ef02e" stroke-width="1.6"/><line x1="1603.5" y1="1486" x2="1603.5" y2="1490" stroke="#2ef02e" stroke-width="1.6"/><line x1="1620.5" y1="1486" x2="1620.5" y2="1490" stroke="#2ef02e" stroke-width="1.6"/><line x1="1637.5" y1="1483" x2="1637.5" y2="1490" stroke="#2ef02e" stroke-width="1.6"/><line x1="1654.5" y1="1486" x2="1654.5" y2="1490" stroke="#2ef02e" stroke-width="1.6"/><line x1="1671.5" y1="1486" x2="1671.5" y2="1490" stroke="#2ef02e" stroke-width="1.6"/><line x1="1688.5" y1="1486" x2="1688.5" y2="1490" stroke="#2ef02e" stroke-width="1.6"/><line x1="1705.5" y1="1486" x2="1705.5" y2="1490" stroke="#2ef02e" stroke-width="1.6"/><line x1="1722.5" y1="1483" x2="1722.5" y2="1490" stroke="#2ef02e" stroke-width="1.6"/><line x1="1739.5" y1="1486" x2="1739.5" y2="1490" stroke="#2ef02e" stroke-width="1.6"/><line x1="1756.5" y1="1486" x2="1756.5" y2="1490" stroke="#2ef02e" stroke-width="1.6"/><line x1="1773.5" y1="1486" x2="1773.5" y2="1490" stroke="#2ef02e" stroke-width="1.6"/><line x1="1790.5" y1="1486" x2="1790.5" y2="1490" stroke="#2ef02e" stroke-width="1.6"/><line x1="1807.5" y1="1483" x2="1807.5" y2="1490" stroke="#2ef02e" stroke-width="1.6"/><line x1="1824.5" y1="1486" x2="1824.5" y2="1490" stroke="#2ef02e" stroke-width="1.6"/><line x1="1841.5" y1="1486" x2="1841.5" y2="1490" stroke="#2ef02e" stroke-width="1.6"/><line x1="1858.5" y1="1486" x2="1858.5" y2="1490" stroke="#2ef02e" stroke-width="1.6"/><line x1="1875.5" y1="1486" x2="1875.5" y2="1490" stroke="#2ef02e" stroke-width="1.6"/><line x1="1892.5" y1="1483" x2="1892.5" y2="1490" stroke="#2ef02e" stroke-width="1.6"/><line x1="1909.5" y1="1486" x2="1909.5" y2="1490" stroke="#2ef02e" stroke-width="1.6"/><line x1="1926.5" y1="1486" x2="1926.5" y2="1490" stroke="#2ef02e" stroke-width="1.6"/><line x1="1943.5" y1="1486" x2="1943.5" y2="1490" stroke="#2ef02e" stroke-width="1.6"/><line x1="1960.5" y1="1486" x2="1960.5" y2="1490" stroke="#2ef02e" stroke-width="1.6"/><line x1="1977.5" y1="1483" x2="1977.5" y2="1490" stroke="#2ef02e" stroke-width="1.6"/><line x1="1994.5" y1="1486" x2="1994.5" y2="1490" stroke="#2ef02e" stroke-width="1.6"/><line x1="2011.5" y1="1486" x2="2011.5" y2="1490" stroke="#2ef02e" stroke-width="1.6"/><line x1="2028.5" y1="1486" x2="2028.5" y2="1490" stroke="#2ef02e" stroke-width="1.6"/><line x1="2045.5" y1="1486" x2="2045.5" y2="1490" stroke="#2ef02e" stroke-width="1.6"/><line x1="2062.5" y1="1483" x2="2062.5" y2="1490" stroke="#2ef02e" stroke-width="1.6"/><line x1="2079.5" y1="1486" x2="2079.5" y2="1490" stroke="#2ef02e" stroke-width="1.6"/><line x1="2096.5" y1="1486" x2="2096.5" y2="1490" stroke="#2ef02e" stroke-width="1.6"/><line x1="2113.5" y1="1486" x2="2113.5" y2="1490" stroke="#2ef02e" stroke-width="1.6"/><line x1="2130.5" y1="1486" x2="2130.5" y2="1490" stroke="#2ef02e" stroke-width="1.6"/><line x1="2147.5" y1="1483" x2="2147.5" y2="1490" stroke="#2ef02e" stroke-width="1.6"/><line x1="2164.5" y1="1486" x2="2164.5" y2="1490" stroke="#2ef02e" stroke-width="1.6"/><line x1="2181.5" y1="1486" x2="2181.5" y2="1490" stroke="#2ef02e" stroke-width="1.6"/><line x1="2198.5" y1="1486" x2="2198.5" y2="1490" stroke="#2ef02e" stroke-width="1.6"/><line x1="2215.5" y1="1486" x2="2215.5" y2="1490" stroke="#2ef02e" stroke-width="1.6"/><line x1="2232.5" y1="1483" x2="2232.5" y2="1490" stroke="#2ef02e" stroke-width="1.6"/><line x1="2249.5" y1="1486" x2="2249.5" y2="1490" stroke="#2ef02e" stroke-width="1.6"/><line x1="2266.5" y1="1486" x2="2266.5" y2="1490" stroke="#2ef02e" stroke-width="1.6"/><line x1="2283.5" y1="1486" x2="2283.5" y2="1490" stroke="#2ef02e" stroke-width="1.6"/><line x1="2300.5" y1="1486" x2="2300.5" y2="1490" stroke="#2ef02e" stroke-width="1.6"/><line x1="2317.5" y1="1483" x2="2317.5" y2="1490" stroke="#2ef02e" stroke-width="1.6"/><line x1="2334.5" y1="1486" x2="2334.5" y2="1490" stroke="#2ef02e" stroke-width="1.6"/><line x1="2351.5" y1="1486" x2="2351.5" y2="1490" stroke="#2ef02e" stroke-width="1.6"/><line x1="2368.5" y1="1486" x2="2368.5" y2="1490" stroke="#2ef02e" stroke-width="1.6"/><line x1="2385.5" y1="1486" x2="2385.5" y2="1490" stroke="#2ef02e" stroke-width="1.6"/><line x1="2402.5" y1="1483" x2="2402.5" y2="1490" stroke="#2ef02e" stroke-width="1.6"/><line x1="2419.5" y1="1486" x2="2419.5" y2="1490" stroke="#2ef02e" stroke-width="1.6"/><line x1="2436.5" y1="1486" x2="2436.5" y2="1490" stroke="#2ef02e" stroke-width="1.6"/><line x1="2453.5" y1="1486" x2="2453.5" y2="1490" stroke="#2ef02e" stroke-width="1.6"/><line x1="2470.5" y1="1486" x2="2470.5" y2="1490" stroke="#2ef02e" stroke-width="1.6"/><line x1="2487.5" y1="1483" x2="2487.5" y2="1490" stroke="#2ef02e" stroke-width="1.6"/><line x1="2504.5" y1="1486" x2="2504.5" y2="1490" stroke="#2ef02e" stroke-width="1.6"/><line x1="2521.5" y1="1486" x2="2521.5" y2="1490" stroke="#2ef02e" stroke-width="1.6"/><line x1="2538.5" y1="1486" x2="2538.5" y2="1490" stroke="#2ef02e" stroke-width="1.6"/><line x1="2555.5" y1="1486" x2="2555.5" y2="1490" stroke="#2ef02e" stroke-width="1.6"/><line x1="2572.5" y1="1483" x2="2572.5" y2="1490" stroke="#2ef02e" stroke-width="1.6"/><line x1="2589.5" y1="1486" x2="2589.5" y2="1490" stroke="#2ef02e" stroke-width="1.6"/><line x1="2606.5" y1="1486" x2="2606.5" y2="1490" stroke="#2ef02e" stroke-width="1.6"/><line x1="2623.5" y1="1486" x2="2623.5" y2="1490" stroke="#2ef02e" stroke-width="1.6"/><line x1="2640.5" y1="1486" x2="2640.5" y2="1490" stroke="#2ef02e" stroke-width="1.6"/><line x1="2657.5" y1="1483" x2="2657.5" y2="1490" stroke="#2ef02e" stroke-width="1.6"/><line x1="2674.5" y1="1486" x2="2674.5" y2="1490" stroke="#2ef02e" stroke-width="1.6"/><line x1="2691.5" y1="1486" x2="2691.5" y2="1490" stroke="#2ef02e" stroke-width="1.6"/><line x1="2708.5" y1="1486" x2="2708.5" y2="1490" stroke="#2ef02e" stroke-width="1.6"/><line x1="2725.5" y1="1486" x2="2725.5" y2="1490" stroke="#2ef02e" stroke-width="1.6"/><line x1="2742.5" y1="1483" x2="2742.5" y2="1490" stroke="#2ef02e" stroke-width="1.6"/><line x1="2759.5" y1="1486" x2="2759.5" y2="1490" stroke="#2ef02e" stroke-width="1.6"/><line x1="2776.5" y1="1486" x2="2776.5" y2="1490" stroke="#2ef02e" stroke-width="1.6"/><line x1="2793.5" y1="1486" x2="2793.5" y2="1490" stroke="#2ef02e" stroke-width="1.6"/><line x1="2810.5" y1="1486" x2="2810.5" y2="1490" stroke="#2ef02e" stroke-width="1.6"/><line x1="2827.5" y1="1483" x2="2827.5" y2="1490" stroke="#2ef02e" stroke-width="1.6"/><line x1="2844.5" y1="1486" x2="2844.5" y2="1490" stroke="#2ef02e" stroke-width="1.6"/><line x1="2861.5" y1="1486" x2="2861.5" y2="1490" stroke="#2ef02e" stroke-width="1.6"/><line x1="2878.5" y1="1486" x2="2878.5" y2="1490" stroke="#2ef02e" stroke-width="1.6"/><text x="1637.5" y="1517" fill="#2ef02e" font-family="Liberation Sans" font-size="21" text-anchor="middle">10 ns</text><text x="1807.5" y="1517" fill="#2ef02e" font-family="Liberation Sans" font-size="21" text-anchor="middle">20 ns</text><text x="1977.5" y="1517" fill="#2ef02e" font-family="Liberation Sans" font-size="21" text-anchor="middle">30 ns</text><text x="2147.5" y="1517" fill="#2ef02e" font-family="Liberation Sans" font-size="21" text-anchor="middle">40 ns</text><text x="2317.5" y="1517" fill="#2ef02e" font-family="Liberation Sans" font-size="21" text-anchor="middle">50 ns</text><text x="2487.5" y="1517" fill="#2ef02e" font-family="Liberation Sans" font-size="21" text-anchor="middle">60 ns</text><text x="2657.5" y="1517" fill="#2ef02e" font-family="Liberation Sans" font-size="21" text-anchor="middle">70 ns</text><text x="2827.5" y="1517" fill="#2ef02e" font-family="Liberation Sans" font-size="21" text-anchor="middle">80 ns</text><text x="1466" y="1517" fill="#2ef02e" font-family="Liberation Sans" font-size="21">ns</text><line x1="1464" y1="1520.5" x2="2895" y2="1520.5" stroke="#8a8a8a" stroke-width="1.4"/><line x1="1467.5" y1="1483" x2="1467.5" y2="1520" stroke="#f0c000" stroke-width="1.5"/><rect x="1468.5" y="1521.5" width="41" height="29" fill="#000" stroke="#f0c000" stroke-width="1.5"/><text x="1471" y="1546" fill="#f0c000" font-family="Liberation Sans" font-size="21" textLength="36" lengthAdjust="spacingAndGlyphs">0 ns</text></svg>
<div style="position:absolute;left:1464px;top:1483px;width:14px;height:37px;background:transparent"></div>
<div style="position:absolute;left:1199px;top:1552px;width:1699px;height:3px;background:#f0f0f0"></div>
<div style="position:absolute;left:1199px;top:1555px;width:1699px;height:36px;background:#808080"></div>
<div style="position:absolute;left:1208px;top:1556px;width:150px;height:34px;background:#f4f4f4"></div>
<div style="position:absolute;left:1208px;top:1556px;width:33px;height:34px;background:#f0f0f0;border-right:2px solid #a0a0a0;border-bottom:2px solid #a0a0a0;border-top:1px solid #fff;border-left:1px solid #fff"></div>
<div style="position:absolute;left:1242px;top:1556px;width:36px;height:34px;background:#f0f0f0;border-right:2px solid #a0a0a0;border-bottom:2px solid #a0a0a0;border-top:1px solid #fff;border-left:1px solid #fff"></div>
<div style="position:absolute;left:1325px;top:1556px;width:33px;height:34px;background:#f0f0f0;border-right:2px solid #a0a0a0;border-bottom:2px solid #a0a0a0;border-top:1px solid #fff;border-left:1px solid #fff"></div>
<svg style="left:1217px;top:1564px" width="12" height="18"><path d="M10 0V17L1 8.5Z" fill="#000"/></svg>
<svg style="left:1337px;top:1564px" width="12" height="18"><path d="M1 0V17L10 8.5Z" fill="#000"/></svg>
<div style="position:absolute;left:1361px;top:1556px;width:100px;height:34px;background:#f4f4f4"></div>
<div style="position:absolute;left:1361px;top:1556px;width:33px;height:34px;background:#f0f0f0;border-right:2px solid #a0a0a0;border-bottom:2px solid #a0a0a0;border-top:1px solid #fff;border-left:1px solid #fff"></div>
<div style="position:absolute;left:1395px;top:1556px;width:23px;height:34px;background:#f0f0f0;border-right:2px solid #a0a0a0;border-bottom:2px solid #a0a0a0;border-top:1px solid #fff;border-left:1px solid #fff"></div>
<div style="position:absolute;left:1428px;top:1556px;width:33px;height:34px;background:#f0f0f0;border-right:2px solid #a0a0a0;border-bottom:2px solid #a0a0a0;border-top:1px solid #fff;border-left:1px solid #fff"></div>
<svg style="left:1370px;top:1564px" width="12" height="18"><path d="M10 0V17L1 8.5Z" fill="#000"/></svg>
<svg style="left:1440px;top:1564px" width="12" height="18"><path d="M1 0V17L10 8.5Z" fill="#000"/></svg>
<div style="position:absolute;left:1464px;top:1564px;width:1432px;height:16px;background:#f0f0f0;border-top:1px solid #ccc;border-bottom:2px solid #a0a0a0"></div>
<div style="position:absolute;left:1465px;top:1565px;width:16px;height:15px;background:#f0f0f0;border-right:2px solid #a0a0a0;border-bottom:2px solid #a0a0a0;border-top:1px solid #fff;border-left:1px solid #fff"></div>
<div style="position:absolute;left:2880px;top:1565px;width:16px;height:15px;background:#f0f0f0;border-right:2px solid #a0a0a0;border-bottom:2px solid #a0a0a0;border-top:1px solid #fff;border-left:1px solid #fff"></div>
<svg style="left:1469px;top:1568px" width="8" height="10"><path d="M6 0V9L1 4.5Z" fill="#000"/></svg>
<svg style="left:2886px;top:1568px" width="8" height="10"><path d="M1 0V9L6 4.5Z" fill="#000"/></svg>
<div style="position:absolute;left:1197px;top:1592px;width:1723px;height:38px;background:#f0f0f0"></div>
<div style="position:absolute;left:1197px;top:1592px;width:1723px;height:2px;background:#fff"></div>
<div style="position:absolute;left:1292px;top:1595px;width:1609px;height:2px;background:#000"></div>
<div style="position:absolute;left:2901px;top:1611px;width:19px;height:19px;background:#c8c8c8"></div>
<div style="position:absolute;left:1197px;top:1594px;width:96px;height:35px;background:#f0f0f0;border:1.5px solid #000;border-top:none;border-radius:0 0 4px 4px"></div>
<div style="position:absolute;left:1292px;top:1595px;width:129px;height:34px;background:#c8c8c8;border:1.5px solid #000;border-radius:0 0 4px 4px"></div>
<div style="position:absolute;left:1420px;top:1595px;width:107px;height:34px;background:#c8c8c8;border:1.5px solid #000;border-radius:0 0 4px 4px"></div>
<svg style="left:1202px;top:1604px" width="16" height="15"><rect x="0.5" y="0.5" width="14" height="13" fill="#000" stroke="#ccc"/><rect x="0.5" y="0.5" width="14" height="3" fill="#ddd"/><path d="M2 9H5V6H8V10H12" stroke="#0f0" stroke-width="1.2" fill="none"/><path d="M2 12H13" stroke="#66f" stroke-width="1.2"/></svg>
<svg style="left:1426px;top:1604px" width="16" height="15"><rect x="0.5" y="0.5" width="14" height="13" fill="#000" stroke="#ccc"/><rect x="0.5" y="0.5" width="14" height="3" fill="#ddd"/><path d="M2 9H5V6H8V10H12" stroke="#0f0" stroke-width="1.2" fill="none"/><path d="M2 12H13" stroke="#66f" stroke-width="1.2"/></svg>
<svg style="left:1299px;top:1604px" width="16" height="15"><rect x="0.5" y="0.5" width="14" height="13" fill="#06f" stroke="#ccc"/><path d="M3 3H7V7H3ZM9 5H12V11H9Z" fill="#0ff"/><path d="M7 5H9M5 7V11H9" stroke="#ff0"/><path d="M6 9V12" stroke="#f00" stroke-width="1.5"/></svg>
<div class="s" style="left:1221px;top:1600px;font-size:21px;line-height:27px;color:#000;">Wave</div>
<div class="s" style="left:1318px;top:1600px;font-size:21px;line-height:27px;color:#000;">Dataflow</div>
<div class="s" style="left:1446px;top:1600px;font-size:21px;line-height:27px;color:#000;">Wave1</div>
<div class="s" style="left:1278px;top:1602px;font-size:16px;line-height:18px;color:#999">&#215;</div>
<div class="s" style="left:1406px;top:1602px;font-size:16px;line-height:18px;color:#999">&#215;</div>
<div class="s" style="left:1513px;top:1602px;font-size:16px;line-height:18px;color:#999">&#215;</div>
<div style="position:absolute;left:2901px;top:1596px;width:10px;height:15px;background:#f0f0f0;border:1px solid #bbb"></div>
<div style="position:absolute;left:2911px;top:1596px;width:9px;height:15px;background:#f0f0f0;border:1px solid #bbb"></div>
<svg style="left:2902px;top:1598px" width="18" height="12"><path d="M6 1L2 5.5L6 10M8 1L4 5.5L8 10" stroke="#555" fill="none"/><path d="M11 1L15 5.5L11 10M13 1L17 5.5L13 10" stroke="#555" fill="none"/></svg>
<div style="position:absolute;left:42px;top:1637px;width:2880px;height:32px;background:#f0f0f0"></div>
<svg style="left:45px;top:1646px" width="15" height="16"><path d="M2 15V5Q2 1 7.5 1Q13 1 13 5V15" fill="none" stroke="#666" stroke-width="3"/><path d="M4 8H11" stroke="#999" stroke-width="2"/></svg>
<div class="s" style="left:65px;top:1640px;font-size:21px;line-height:27px;color:#000;">Transcript</div>
<div style="position:absolute;left:160px;top:1650px;width:2708px;height:1.5px;background:#8a8a8a"></div>
<div style="position:absolute;left:160px;top:1651.5px;width:2708px;height:1.0px;background:#fff"></div>
<div style="position:absolute;left:160px;top:1655px;width:2708px;height:1.5px;background:#8a8a8a"></div>
<div style="position:absolute;left:160px;top:1656.5px;width:2708px;height:1.0px;background:#fff"></div>
<div style="position:absolute;left:1500px;top:1648px;width:28px;height:11px;background:#f0f0f0"></div>
<svg style="left:0;top:1650px" width="2964" height="10"><rect x="1506" y="0" width="1.6" height="1.6" fill="#555"/><rect x="1510" y="0" width="1.6" height="1.6" fill="#555"/><rect x="1514" y="0" width="1.6" height="1.6" fill="#555"/><rect x="1518" y="0" width="1.6" height="1.6" fill="#555"/><rect x="1522" y="0" width="1.6" height="1.6" fill="#555"/><rect x="1508" y="3" width="1.6" height="1.6" fill="#555"/><rect x="1512" y="3" width="1.6" height="1.6" fill="#555"/><rect x="1516" y="3" width="1.6" height="1.6" fill="#555"/><rect x="1520" y="3" width="1.6" height="1.6" fill="#555"/><rect x="1506" y="6" width="1.6" height="1.6" fill="#555"/><rect x="1510" y="6" width="1.6" height="1.6" fill="#555"/><rect x="1514" y="6" width="1.6" height="1.6" fill="#555"/><rect x="1518" y="6" width="1.6" height="1.6" fill="#555"/><rect x="1522" y="6" width="1.6" height="1.6" fill="#555"/></svg>
<div style="position:absolute;left:2872px;top:1646px;width:13px;height:14px;background:#f0f0f0;border-right:1px solid #888;border-bottom:1px solid #888;border-top:1px solid #fff;border-left:1px solid #fff"></div>
<svg style="left:2873px;top:1647px" width="12" height="13"><path d="M6 1.5V11.5M1 6.5H11" stroke="#000" stroke-width="2.4"/></svg>
<div style="position:absolute;left:2888px;top:1646px;width:13px;height:14px;background:#f0f0f0;border-right:1px solid #888;border-bottom:1px solid #888;border-top:1px solid #fff;border-left:1px solid #fff"></div>
<svg style="left:2889px;top:1647px" width="12" height="13"><rect x="1.5" y="5.5" width="5" height="5" fill="none" stroke="#000" stroke-width="1.6"/><path d="M4 8 L10 2 M6 2H10V6" stroke="#000" stroke-width="1.6" fill="none"/></svg>
<div style="position:absolute;left:2904px;top:1646px;width:13px;height:14px;background:#f0f0f0;border-right:1px solid #888;border-bottom:1px solid #888;border-top:1px solid #fff;border-left:1px solid #fff"></div>
<svg style="left:2905px;top:1647px" width="12" height="13"><path d="M1.5 1.5L10.5 10.5M10.5 1.5L1.5 10.5" stroke="#000" stroke-width="1.8"/></svg>
<div style="position:absolute;left:46px;top:1669px;width:2840px;height:173px;background:#fff;border-left:2px solid #000;border-top:2px solid #000"></div>
<div style="position:absolute;left:48px;top:1669px;width:108px;height:2px;background:#fff"></div>
<div class="m" style="left:50px;top:1676px;font-size:23.33px;line-height:28px;color:#0000ff;white-space:pre"># ** Note: $finish    : C:/Users/Microsoft/Documents/code/eetree/tb_control.v(82)</div>
<div class="m" style="left:50px;top:1703px;font-size:23.33px;line-height:28px;color:#0000ff;white-space:pre">#    Time: 80 ns  Iteration: 0  Instance: /tb_control</div>
<div class="m" style="left:50px;top:1730px;font-size:23.33px;line-height:28px;color:#1a9a1a;white-space:pre"># 1</div>
<div class="m" style="left:50px;top:1757px;font-size:23.33px;line-height:28px;color:#1a9a1a;white-space:pre"># Break in Module tb_control at C:/Users/Microsoft/Documents/code/eetree/tb_control.v line 82</div>
<div class="s" style="left:48px;top:1814px;font-size:21px;line-height:27px;color:#000080;">VSIM 43&gt;</div>
<div style="position:absolute;left:2886px;top:1669px;width:34px;height:173px;background:#f6f6f6;border-left:1px solid #ddd"></div>
<div style="position:absolute;left:2887px;top:1669px;width:32px;height:32px;background:#f0f0f0;border-right:2px solid #a0a0a0;border-bottom:2px solid #a0a0a0;border-top:1px solid #fff;border-left:1px solid #fff"></div>
<svg style="left:2895px;top:1679px" width="18" height="10"><path d="M0 9H17L8.5 0Z" fill="#000"/></svg>
<div style="position:absolute;left:2887px;top:1792px;width:32px;height:16px;background:#f0f0f0;border-top:1px solid #a0a0a0"></div>
<div style="position:absolute;left:2887px;top:1808px;width:32px;height:33px;background:#f0f0f0;border-right:2px solid #a0a0a0;border-bottom:2px solid #a0a0a0;border-top:1px solid #fff;border-left:1px solid #fff"></div>
<svg style="left:2895px;top:1820px" width="18" height="10"><path d="M0 0H17L8.5 9Z" fill="#000"/></svg>
<div style="position:absolute;left:42px;top:1842px;width:2880px;height:40px;background:#f0f0f0;border-top:1px solid #ccc"></div>
<div style="position:absolute;left:45px;top:1846px;width:326px;height:33px;border-top:1px solid #a0a0a0;border-left:1px solid #a0a0a0;border-bottom:1px solid #fff;border-right:1px solid #fff"></div>
<div style="position:absolute;left:375px;top:1846px;width:150px;height:33px;border-top:1px solid #a0a0a0;border-left:1px solid #a0a0a0;border-bottom:1px solid #fff;border-right:1px solid #fff"></div>
<div style="position:absolute;left:528px;top:1846px;width:390px;height:33px;border-top:1px solid #a0a0a0;border-left:1px solid #a0a0a0;border-bottom:1px solid #fff;border-right:1px solid #fff"></div>
<div style="position:absolute;left:922px;top:1846px;width:1981px;height:33px;border-top:1px solid #a0a0a0;border-left:1px solid #a0a0a0;border-bottom:1px solid #fff;border-right:1px solid #fff"></div>
<div class="s" style="left:52px;top:1850px;font-size:21px;line-height:27px;color:#000;">0 ns to 84 ns</div>
<div class="s" style="left:379px;top:1850px;font-size:21px;line-height:27px;color:#000;">Project : verilog</div>
<div class="s" style="left:532px;top:1850px;font-size:21px;line-height:27px;color:#000;">Now: 80 ns</div>
<div class="s" style="left:654px;top:1850px;font-size:21px;line-height:27px;color:#000;">Delta: 0</div>
<div class="s" style="left:926px;top:1850px;font-size:21px;line-height:27px;color:#000;">sim:/tb_control/#INITIAL#42</div>
<svg style="left:2906px;top:1866px" width="14" height="14"><path d="M13 3L3 13M13 7L7 13M13 11L11 13" stroke="#aaa" stroke-width="1"/></svg>
<svg style="left:0;top:0" width="2964" height="220"><defs><pattern id="dgrey" width="2" height="2" patternUnits="userSpaceOnUse"><rect width="1" height="1" fill="#444"/><rect x="1" y="1" width="1" height="1" fill="#444"/></pattern><pattern id="dgrey2" width="2" height="2" patternUnits="userSpaceOnUse"><rect width="1" height="1" fill="#666"/><rect x="1" y="1" width="1" height="1" fill="#666"/></pattern><pattern id="dred" width="2" height="2" patternUnits="userSpaceOnUse"><rect width="1" height="1" fill="#e33"/><rect x="1" y="1" width="1" height="1" fill="#e33"/></pattern><pattern id="dblue" width="2" height="2" patternUnits="userSpaceOnUse"><rect width="1" height="1" fill="#33c"/><rect x="1" y="1" width="1" height="1" fill="#33c"/></pattern><pattern id="dyel" width="2" height="2" patternUnits="userSpaceOnUse"><rect width="1" height="1" fill="#dc6"/><rect x="1" y="1" width="1" height="1" fill="#dc6"/></pattern></defs><g transform="translate(58,133)"><path d="M1.5 0.5H9.5L13.5 4.5V15.5H1.5Z" fill="#fff" stroke="#000"/><path d="M3 3.5H8M3 5.5H11M3 7.5H7M3 9.5H11M3 11.5H8" stroke="#000"/></g><g transform="translate(78,133)"><path d="M0 6H6L3 9Z" fill="#000"/></g><g transform="translate(89,133)"><path d="M0.5 4.5H5L6 3H9V5H12V7H4L0.5 14.5Z" fill="#ff0" stroke="#000"/><path d="M0.5 14.5L4 7.5H15L11.5 14.5Z" fill="#808000" stroke="#000"/><path d="M9 2Q11 0 13 2M12 1L13.5 2L12 3" stroke="#000" fill="none"/></g><g transform="translate(112,133)"><rect x="0.5" y="0.5" width="14" height="14" fill="#808000" stroke="#000"/><rect x="3" y="1" width="9" height="6" fill="#fff"/><rect x="3" y="9" width="9" height="6" fill="#000"/><rect x="9" y="10" width="2" height="3" fill="#fff"/></g><g transform="translate(133,133)"><path d="M1 6L6 1L9 4L13 0V6H8L10 4L6 7Z M15 10L10 15L7 12L3 16V10H8L6 12L10 9Z" fill="#9c9" opacity="0.8"/></g><g transform="translate(155,133)"><path d="M3.5 0.5H13.5L12 5H2Z" fill="#fff" stroke="#000"/><rect x="0.5" y="5.5" width="15" height="7" rx="2" fill="#fff" stroke="#000"/><path d="M2 8.5H14M3 14.5H13" stroke="#000" stroke-width="1.5"/><rect x="6" y="9" width="3" height="2" fill="#ee0"/></g><g transform="translate(192,133)"><path d="M4 0L8 9M12 0L8 9" stroke="#000"/><circle cx="4" cy="12" r="2.5" fill="none" stroke="#00f" stroke-width="1.3"/><circle cx="11" cy="12" r="2.5" fill="none" stroke="#00f" stroke-width="1.3"/></g><g transform="translate(211,133)"><path d="M0.5 0.5H6L8 2.5V10.5H0.5Z" fill="#fff" stroke="#000"/><path d="M2 3.5H6M2 5.5H6M2 7.5H6" stroke="#000"/><path d="M6.5 4.5H12L14.5 7V15.5H6.5Z" fill="#fff" stroke="#000080"/><path d="M8 8.5H13M8 10.5H13M8 12.5H13" stroke="#000080"/></g><g transform="translate(232,133)"><rect x="0.5" y="1.5" width="13" height="13" rx="1" fill="#808040" stroke="#000"/><path d="M5 1H9V3H5Z" fill="#ff0" stroke="#000" stroke-width="0.6"/><path d="M6.5 7.5H13L15.5 10V15.5H6.5Z" fill="#fff" stroke="#000080" stroke-width="1.2"/><path d="M8 11.5H13M8 13.5H13" stroke="#000080"/></g><g transform="translate(255,133)"><path d="M4 4Q8 0 12 3Q15 7 11 12" stroke="#000" stroke-width="1.4" fill="none"/><path d="M0 3V8H5Z" fill="#000"/><path d="M0 14.5H9" stroke="#000" stroke-width="2"/><path d="M10 14.5H15" stroke="#000" stroke-width="2" stroke-dasharray="1 1"/></g><g transform="translate(276,133)"><path d="M2 6Q5 0 10 2L14 5M12 3L14 5L11 7" stroke="#000" stroke-dasharray="1 1.5" fill="none"/><path d="M1 14.5H15" stroke="#000" stroke-dasharray="1 1"/></g><g transform="translate(310,133)"><circle cx="7.5" cy="7.5" r="7" fill="#5bb85b"/><circle cx="7.5" cy="6" r="5" fill="#8fd88f" opacity="0.7"/><path d="M7.5 3.5V11.5M3.5 7.5H11.5" stroke="#fff" stroke-width="2.4"/></g><g transform="translate(329,133)"><path d="M0 6H6L3 9Z" fill="#000"/></g><g transform="translate(340,133)"><path d="M1 1H6V6H10V1H15V15H10V10H6V15H1Z" fill="#000"/><path d="M2 4.5H4M12 4.5H14M3 12.5H4M12 12.5H13" stroke="#fff"/></g><g transform="translate(362,133)"><rect x="0.5" y="0.5" width="7" height="7" fill="#fff" stroke="#000"/><rect x="0.5" y="9.5" width="7" height="6" fill="#fff" stroke="#000"/><path d="M4 2V6M2 4H6M4 11V14M2 12.5H6M8 3H15M8 12H15" stroke="#000"/></g><g transform="translate(604,133)"><path d="M1 9H6V16H1Z M9 9H15V16H9Z M5 5H11V12H5Z" fill="#555"/><path d="M2 3Q2 0 6 0Q10 0 9 4L7 6V9" stroke="#f90" stroke-width="2.2" fill="none"/><rect x="6" y="11" width="2.5" height="3" fill="#f90"/></g><g transform="translate(646,132)"><rect x="2" y="2" width="8" height="8" rx="2" fill="none" stroke="#060" stroke-width="2"/><rect x="6" y="6" width="8" height="8" rx="2" fill="none" stroke="#060" stroke-width="2"/><path d="M5 5L11 11" stroke="#9c9"/></g><path d="M666.5 132 V152.5 H646" stroke="#a0a0a0" fill="none"/><g transform="translate(669,133)"><path d="M1 7V2H3" stroke="#00f" stroke-width="1.4" fill="none"/><path d="M1 10V15H3" stroke="#a00" stroke-width="1.6" fill="none"/><rect x="4.5" y="0.5" width="10" height="14" fill="#fff" stroke="#888"/><path d="M6 3.5H10M7 5.5H12M7 7.5H12M7 9.5H12M6 11.5H12" stroke="#000"/></g><g transform="translate(690,133)"><path d="M0 6H6L3 9Z" fill="#000"/></g><g transform="translate(702,133)"><path d="M8 0L15 7H11V16H5V7H1Z" fill="#222"/><path d="M8 1L12 6H9V15H7V6" fill="#666"/></g><g transform="translate(723,133)"><path d="M0 8L7 1V5H16V11H7V15Z" fill="#222"/><path d="M2 8L6 4V6H15V8H6" fill="#666"/></g><g transform="translate(745,133)"><path d="M16 8L9 1V5H0V11H9V15Z" fill="url(#dgrey)"/></g><g transform="translate(779,133)"><rect x="0.5" y="0.5" width="10" height="14" fill="#fff" stroke="#888"/><path d="M2 3.5H6M3 5.5H8M3 7.5H8M3 9.5H8M2 11.5H8" stroke="#000"/><path d="M13 1V16M10 1H16M10 5L13 2L16 5M10 8L13 5L16 8" stroke="#00a" stroke-width="1.2" fill="none"/></g><g transform="translate(944,133)"><rect x="0.5" y="0.5" width="10" height="14" fill="#fff" stroke="#888"/><path d="M2 3.5H6M3 5.5H8M3 7.5H8M3 9.5H8M2 11.5H8" stroke="#000"/><path d="M13 0V15M10 15H16M10 11L13 14L16 11" stroke="#00a" stroke-width="1.2" fill="none"/></g><g transform="translate(966,133)"><rect x="0.5" y="0.5" width="10" height="14" fill="#fff" stroke="#888"/><path d="M2 3.5H6M3 5.5H8M3 7.5H8M3 9.5H8M2 11.5H8" stroke="#000"/><path d="M13 1L15 3L13 5L11 3Z" fill="none" stroke="#f00"/><path d="M13 5V15M10 12L13 15L16 12" stroke="#00a" stroke-width="1.2" fill="none"/></g><g transform="translate(988,133)"><rect x="0.5" y="0.5" width="10" height="14" fill="#fff" stroke="#888"/><path d="M2 3.5H6M3 5.5H8M3 7.5H8M3 9.5H8M2 11.5H8" stroke="#000"/><path d="M13 0V15M10 9L13 12L16 9M10 12L13 15L16 12" stroke="#00a" stroke-width="1.2" fill="none"/></g><g transform="translate(1010,133)"><rect x="0.5" y="0.5" width="10" height="14" fill="#fff" stroke="#888"/><path d="M2 3.5H6M3 5.5H8M3 7.5H8M3 9.5H8M2 11.5H8" stroke="#000"/><path d="M13 5V15M10 15H16" stroke="#00a" stroke-width="1.2"/><path d="M5 0L15 11M15 0L6 11" stroke="#800" stroke-width="2"/></g><g transform="translate(1033,133)"><circle cx="8" cy="8" r="7" fill="url(#dred)"/><path d="M8 4Q5 8 8 12" stroke="#fff" fill="none"/></g><g transform="translate(1066,132)"><rect x="0" y="0" width="20" height="20" fill="#f0f0f0"/><path d="M1 3H5Q7 3 7 5Q7 7 5 7H3V9" stroke="#000" stroke-width="2" fill="none"/><rect x="4" y="15" width="13" height="3" fill="#555"/><rect x="4" y="10" width="2" height="6" fill="#555"/><rect x="7" y="12" width="2" height="3" fill="#0c0"/><rect x="10" y="5" width="2" height="10" fill="#ee0"/><rect x="13" y="7" width="3" height="8" fill="#f00"/></g><path d="M1086.5 132 V152.5 H1066" stroke="#a0a0a0" fill="none"/><g transform="translate(1092,132)"><rect x="0" y="0" width="20" height="20" fill="#f0f0f0"/><path d="M1 9V3H11V9M6 3V9" stroke="#000" stroke-width="2" fill="none"/><rect x="4" y="15" width="13" height="3" fill="#555"/><rect x="4" y="10" width="2" height="6" fill="#555"/><rect x="7" y="12" width="2" height="3" fill="#0c0"/><rect x="10" y="5" width="2" height="10" fill="#ee0"/><rect x="13" y="7" width="3" height="8" fill="#f00"/></g><path d="M1112.5 132 V152.5 H1092" stroke="#a0a0a0" fill="none"/><g transform="translate(1118,133)"><path d="M3 9L1 7L2 6L5 8V2L6 1L7 2V6V1L8 0L9 1V6V2L10 1L11 2V7L12 4L13 5L11 12L7 15Z" fill="#fff" stroke="#000"/><path d="M6 14L12 9L14 11L8 16Z" fill="#8ad"/></g><g transform="translate(1158,133)"><path d="M1 1L8 15M8 1L1 15" stroke="#a00" stroke-dasharray="1.5 1"/><path d="M14 3L10 7L14 11Z" fill="url(#dgrey2)"/></g><g transform="translate(1180,133)"><path d="M7 1L15 15M15 1L7 15" stroke="#a00" stroke-dasharray="1.5 1"/><path d="M1 3L5 7L1 11Z" fill="url(#dgrey2)"/></g><g transform="translate(1202,132)"><rect x="0" y="0" width="20" height="20" fill="#f0f0f0"/><path d="M4.5 3.5H11L14.5 7V16.5H4.5Z" fill="none" stroke="#000" stroke-dasharray="1 1"/><circle cx="7" cy="9" r="1" fill="#f00"/><circle cx="12" cy="9" r="1" fill="#f00"/><circle cx="9.5" cy="12" r="1" fill="#f00"/></g><path d="M1222.5 132 V152.5 H1202" stroke="#a0a0a0" fill="none"/><g transform="translate(1231,133)"><path d="M1 1L10 10M10 1L1 10" stroke="#a33" stroke-width="1.2"/><path d="M9 5L15 11L11 15L6 10Z" fill="url(#dblue)"/></g><g transform="translate(1268,132)"><rect x="0.5" y="0.5" width="19" height="19" fill="#fff" stroke="#bbb"/><text x="10" y="14" font-family="Liberation Mono" font-size="9" text-anchor="middle" fill="#000">i</text></g><path d="M1288.5 132 V152.5 H1268" stroke="#a0a0a0" fill="none"/><g transform="translate(1294,132)"><rect x="0.5" y="0.5" width="19" height="19" fill="#fff" stroke="#bbb"/><text x="10" y="14" font-family="Liberation Mono" font-size="9" text-anchor="middle" fill="#000">o</text></g><path d="M1314.5 132 V152.5 H1294" stroke="#a0a0a0" fill="none"/><g transform="translate(1320,132)"><rect x="0.5" y="0.5" width="19" height="19" fill="#fff" stroke="#bbb"/><text x="10" y="14" font-family="Liberation Mono" font-size="9" text-anchor="middle" fill="#000">I/O</text></g><path d="M1340.5 132 V152.5 H1320" stroke="#a0a0a0" fill="none"/><g transform="translate(1346,132)"><rect x="0.5" y="0.5" width="19" height="19" fill="#fff" stroke="#bbb"/><rect x="4.5" y="5.5" width="11" height="10" fill="none" stroke="#000" stroke-dasharray="1 1"/></g><path d="M1366.5 132 V152.5 H1346" stroke="#a0a0a0" fill="none"/><g transform="translate(1372,132)"><rect x="0.5" y="0.5" width="19" height="19" fill="#f0f0f0" stroke="#bbb"/><text x="10" y="14" font-family="Liberation Sans" font-size="8" text-anchor="middle" fill="#000">ALL</text></g><path d="M1392.5 132 V152.5 H1372" stroke="#a0a0a0" fill="none"/><g transform="translate(1398,133)"><path d="M1 12L8 3L11 6L4 15Z" fill="url(#dblue)"/><path d="M6 3L10 0L13 3L9 6Z" fill="#dce"/><path d="M11 6L15 8L12 13L9 10Z" fill="#cec"/></g><g transform="translate(1561,132)"><rect x="0" y="0" width="20" height="20" fill="#fff"/><path d="M6 2V16L9 13L12 18L14 17L11 12H15Z" fill="#000"/></g><path d="M1581.5 132 V152.5 H1561" stroke="#a0a0a0" fill="none"/><g transform="translate(1586,132)"><rect x="0" y="0" width="20" height="20" fill="#f0f0f0"/><rect x="3.5" y="3.5" width="9" height="9" fill="none" stroke="#000" stroke-width="2"/><rect x="7.5" y="7.5" width="9" height="9" fill="none" stroke="#000" stroke-width="2"/></g><path d="M1606.5 132 V152.5 H1586" stroke="#a0a0a0" fill="none"/><g transform="translate(1612,132)"><rect x="0" y="0" width="20" height="20" fill="#f0f0f0"/><path d="M10 2L14 6H6ZM10 18L14 14H6ZM2 10L6 6V14ZM18 10L14 6V14Z" fill="none" stroke="#000" stroke-dasharray="1 1"/></g><path d="M1632.5 132 V152.5 H1612" stroke="#a0a0a0" fill="none"/><g transform="translate(1638,132)"><rect x="0" y="0" width="20" height="20" fill="#f0f0f0"/><path d="M6 3V15M13 3V15M3 15H9M10 15H16" stroke="#000" stroke-width="1.5"/></g><path d="M1658.5 132 V152.5 H1638" stroke="#a0a0a0" fill="none"/><g transform="translate(1664,132)"><rect x="0" y="0" width="20" height="20" fill="#f0f0f0"/><path d="M4 4H8M4 8H8M4 12H8M11 3V17M15 3V17M13 5V15" stroke="#000" stroke-dasharray="1 1"/></g><path d="M1684.5 132 V152.5 H1664" stroke="#a0a0a0" fill="none"/><g transform="translate(1700,133)"><rect x="1" y="0" width="8" height="16" rx="1" fill="#000"/><circle cx="5" cy="3" r="2" fill="#f00"/><circle cx="5" cy="8" r="2" fill="#ee0"/><circle cx="5" cy="13" r="2" fill="#0c0"/><path d="M11 3L15 8L11 13Z" fill="none" stroke="#000"/></g><g transform="translate(1741,133)"><path d="M3 2V12M1 12H9V15H1Z" stroke="#000" fill="#fc0"/><path d="M6 10H9V13M11 1V7M8 4H14" stroke="#000" stroke-width="1.4" fill="none"/></g><g transform="translate(1763,133)"><path d="M4 2V12M1 12H10V15H1Z" stroke="#cb6" fill="url(#dyel)"/><path d="M7 4.5H14" stroke="#cb6" stroke-dasharray="1 1"/></g><g transform="translate(1785,133)"><path d="M1 16V2H6" stroke="#080" stroke-width="1.5" fill="none"/><path d="M5 8L9 4V6H15V10H9V12Z" fill="#00f"/><path d="M1 15.5H10" stroke="#080" stroke-width="1.5"/></g><g transform="translate(1807,133)"><path d="M15 0V14H10" stroke="#080" stroke-width="1.5" fill="none"/><path d="M12 8L8 4V6H1V10H8V12Z" fill="#00f"/><path d="M15 1.5H10" stroke="#080" stroke-width="1.5"/></g><g transform="translate(1829,133)"><path d="M1 1V7L8 15H15" stroke="#080" stroke-dasharray="1 1" fill="none"/><path d="M6 10L8 12L10 10" stroke="#00f" fill="none"/></g><g transform="translate(1851,133)"><path d="M1 1H8V15H15" stroke="#080" stroke-dasharray="1 1" fill="none"/><path d="M6 8L8 10L10 8" stroke="#00f" fill="none"/></g><g transform="translate(1873,133)"><path d="M15 1H8V15H1" stroke="#080" stroke-dasharray="1 1" fill="none"/><path d="M6 8L8 10L10 8" stroke="#00f" fill="none"/></g><g transform="translate(1895,133)"><path d="M15 1H10V12L3 15" stroke="#080" stroke-dasharray="1 1" fill="none"/><path d="M6 11L8 13L10 11" stroke="#00f" fill="none"/></g><g transform="translate(1935,133)"><path d="M1 2Q6 2 6 8Q6 14 1 14M1 8H6" stroke="#000" stroke-width="1.6" fill="none"/><path d="M7 8L11 4V6H16V10H11V12Z" fill="#08f"/></g><g transform="translate(1954,133)"><path d="M0 6H6L3 9Z" fill="#000"/></g><g transform="translate(1966,133)"><path d="M15 2Q10 2 10 8Q10 14 15 14M15 8H10" stroke="#000" stroke-width="1.6" fill="none"/><path d="M10 8L6 4V6H1V10H6V12Z" fill="#00f"/></g><g transform="translate(1985,133)"><path d="M0 6H6L3 9Z" fill="#000"/></g><g transform="translate(1997,133)"><path d="M3 1V15M1 3H5" stroke="#000" stroke-dasharray="1 1"/><path d="M9 3L14 8L9 13L4 8Z" fill="#6c6" stroke="#000" stroke-dasharray="1 1"/><path d="M14 8.5H16" stroke="#00f"/></g><g transform="translate(2369,133)"><path d="M1 3H6V13H1ZM9 3H14V13H9Z" fill="url(#dgrey2)"/><path d="M1 14L4 16M12 14L15 16" stroke="#33f" stroke-dasharray="1 1"/></g><g transform="translate(2388,133)"><path d="M1 3H6V13H1ZM9 3H14V13H9Z" fill="url(#dgrey2)"/><path d="M1 14L4 16M12 14L15 16" stroke="#33f" stroke-dasharray="1 1"/></g><g transform="translate(2413,133)"><path d="M2 1H13L15 8L9 15H1Z" fill="url(#dgrey2)"/><path d="M8 11L13 15" stroke="#8af" stroke-width="2"/></g><g transform="translate(2456,133)"><circle cx="6" cy="6" r="5" fill="#fff" stroke="#000" stroke-width="1.6"/><path d="M3.5 6H8.5M6 3.5V8.5" stroke="#000" stroke-width="1.6"/><path d="M10 10L15 15" stroke="#00a" stroke-width="3"/></g><g transform="translate(2478,133)"><circle cx="6" cy="6" r="5" fill="#fff" stroke="#000" stroke-width="1.6"/><path d="M3.5 6H8.5" stroke="#000" stroke-width="1.6"/><path d="M10 10L15 15" stroke="#00a" stroke-width="3"/></g><g transform="translate(2498,132)"><rect x="0" y="0" width="20" height="20" fill="#f0f0f0"/><circle cx="8" cy="8" r="6" fill="#036" stroke="#000" stroke-width="1.2"/><path d="M12 12L18 18" stroke="#00a" stroke-width="3"/></g><path d="M2518.5 132 V152.5 H2498" stroke="#a0a0a0" fill="none"/><g transform="translate(2521,133)"><path d="M4 5V12M1 12H9V15H1Z" stroke="#000" fill="#fc0"/><circle cx="11" cy="4" r="3.5" fill="#bbb" stroke="#000"/><path d="M12 7L15 10" stroke="#00a" stroke-width="1.5"/></g><g transform="translate(2543,133)"><path d="M3 8V12M1 12H6V15H1ZM9 8V12M7 12H12V15H7Z" stroke="#000" fill="#fc0"/><circle cx="11" cy="4" r="3" fill="#bbb" stroke="#000"/></g><g transform="translate(2565,133)"><rect x="0.5" y="0.5" width="9" height="9" fill="none" stroke="#00a" stroke-dasharray="1 1"/><circle cx="10" cy="10" r="3.5" fill="#bbb" stroke="#333"/><path d="M12 12L15 15" stroke="#00a" stroke-width="1.5"/></g><g transform="translate(2606,132)"><rect x="0" y="0" width="20" height="20" fill="#fff"/><path d="M10 4V17M3 17H17" stroke="#080" stroke-width="1.5"/></g><path d="M2626.5 132 V152.5 H2606" stroke="#a0a0a0" fill="none"/><g transform="translate(2632,132)"><rect x="0" y="0" width="20" height="20" fill="#f0f0f0"/><rect x="7" y="2" width="6" height="15" fill="#00a"/><rect x="8.5" y="3.5" width="3" height="13" fill="#33c"/><path d="M2 17.5H18" stroke="#080" stroke-width="1.5"/></g><path d="M2652.5 132 V152.5 H2632" stroke="#a0a0a0" fill="none"/><g transform="translate(2658,132)"><rect x="0" y="0" width="20" height="20" fill="#f0f0f0"/><rect x="2" y="2" width="16" height="16" fill="#063"/><path d="M3 17V3H7V17H10V3H14V17H17" stroke="#0a0" fill="none"/></g><path d="M2678.5 132 V152.5 H2658" stroke="#a0a0a0" fill="none"/><g transform="translate(2695,133)"><rect x="1" y="1" width="15" height="15" fill="url(#dblue)"/></g><g transform="translate(2718,133)"><rect x="5" y="2" width="4" height="14" fill="url(#dblue)"/><path d="M1 15.5H5M9 2.5H14" stroke="#0a0" stroke-dasharray="1 1"/><path d="M5.5 2V15" stroke="#ee0" stroke-dasharray="1 1"/></g><g transform="translate(2740,133)"><path d="M1 15H7V2H15" stroke="#0a0" stroke-dasharray="1 1" fill="none"/></g><g transform="translate(2762,133)"><path d="M1 15.5H7M7 2.5H15" stroke="#0a0" stroke-dasharray="1 1" fill="none"/><path d="M7.5 2V15" stroke="#ee0" stroke-dasharray="1 1"/></g><g transform="translate(2802,133)"><path d="M1 10L8 6L15 10L8 14Z" fill="#fff" stroke="#000"/><path d="M1 12L8 16L15 12M1 8L8 12L15 8" fill="none" stroke="#000"/><path d="M8 0V7M5 4L8 7L11 4" stroke="#00a" stroke-width="2" fill="none"/></g><g transform="translate(2822,133)"><rect x="0.5" y="4.5" width="15" height="11" fill="#fff" stroke="#000"/><path d="M2 13.5H14" stroke="#000" stroke-dasharray="1 1"/><path d="M5 4Q5 0 9 0Q12 1 10 5L8 7V10" stroke="#18f" stroke-width="2.4" fill="none"/><circle cx="8" cy="13.5" r="1.5" fill="#18f"/></g><g transform="translate(2845,133)"><rect x="0.5" y="6.5" width="15" height="9" fill="#fff" stroke="#000"/><path d="M2 13.5H14" stroke="#000" stroke-dasharray="1 1"/><path d="M4 0V6M1 3L4 6L7 3M11 0V6M8 3L11 6L14 3" stroke="#00a" stroke-width="1.5" fill="none"/></g><g transform="translate(2867,133)"><path d="M3 0.5H12Q15 0.5 15 4V12H5Q3 12 3 9Z" fill="#fff" stroke="#333"/><path d="M6 4.5H12M6 6.5H12M6 8.5H11" stroke="#55a"/><path d="M0 3.5H2M0 6.5H2M0 9.5H2" stroke="#99c"/><rect x="1" y="11" width="4" height="4" fill="#c00" transform="rotate(45 3 13)"/><circle cx="13" cy="14" r="2" fill="#c00"/></g><g transform="translate(2889,133)"><rect x="0.5" y="0.5" width="10" height="14" fill="#fff" stroke="#888"/><path d="M2 3.5H8M2 5.5H8M2 7.5H8M2 9.5H8" stroke="#000"/><path d="M5 1L15 9M15 1L6 10" stroke="#a00" stroke-width="1.6"/><path d="M13 8V15M10 15H16M10 12L13 15L16 12" stroke="#00a" fill="none"/></g><g transform="translate(61,174)"><path d="M5 0H11V5H14L8 11L2 5H5Z" fill="#00f"/><circle cx="8" cy="14" r="2.2" fill="#00f"/></g><g transform="translate(80,174)"><path d="M2 8Q4 1 10 2Q13 3 14 7H16L12 12L8 7H10Q9 5 7 5Q5 5 4 8Z" fill="#00f"/><circle cx="3" cy="11" r="2" fill="#00f"/></g><g transform="translate(105,174)"><path d="M5 12V6H2L8 0L14 6H11V12Z" fill="#00f"/><circle cx="8" cy="14" r="2.2" fill="#00f"/></g><g transform="translate(137,174)"><path d="M5 0H11V5H14L8 11L2 5H5Z" fill="#00f"/><circle cx="8" cy="13.5" r="2.2" fill="#00f"/><path d="M1.5 11V16M3.5 11V16M13.5 11V16M15.5 11V16" stroke="#00f"/></g><g transform="translate(155,174)"><path d="M0 6H6L3 9Z" fill="#000"/></g><g transform="translate(166,174)"><path d="M2 8Q4 1 10 2Q13 3 14 7H16L12 12L8 7H10Q9 5 7 5Q5 5 4 8Z" fill="#00f"/><circle cx="3" cy="10" r="2" fill="#00f"/><path d="M1.5 13V16M3.5 13V16M5.5 13V16M7.5 13V16M9.5 13V16M11.5 13V16M13.5 13V16M15.5 13V16" stroke="#00f"/></g><g transform="translate(186,174)"><path d="M0 6H6L3 9Z" fill="#000"/></g><g transform="translate(199,174)"><path d="M5 11V6H2L8 0L14 6H11V11Z" fill="#00f"/><circle cx="8" cy="13.5" r="2.2" fill="#00f"/><path d="M1.5 11V16M3.5 11V16M13.5 11V16M15.5 11V16" stroke="#00f"/></g><g transform="translate(1721,174)"><path d="M1 3Q4 0 7 3Q10 5 13 2V10Q10 13 7 10Q4 7 1 10Z" fill="#5a9ee0" stroke="#2a5ea0"/><path d="M7.5 2V15" stroke="#a85" stroke-width="1.5"/><circle cx="10" cy="12" r="3.5" fill="#4b4"/><path d="M8 12H12M10 10V14" stroke="#fff"/></g><g transform="translate(1741,174)"><path d="M0 6H6L3 9Z" fill="#000"/></g><g transform="translate(1752,174)"><path d="M1 3Q4 0 7 3Q10 5 13 2V10Q10 13 7 10Q4 7 1 10Z" fill="#5a9ee0" stroke="#2a5ea0"/><path d="M7.5 2V15" stroke="#a85" stroke-width="1.5"/><circle cx="10" cy="12" r="3.5" fill="#e63"/><path d="M8 12.5H12" stroke="#fff"/></g><g transform="translate(1772,174)"><path d="M0 6H6L3 9Z" fill="#000"/></g><g transform="translate(1784,174)"><path d="M1 3Q4 0 7 3Q10 5 13 2V10Q10 13 7 10Q4 7 1 10Z" fill="#5a9ee0" stroke="#2a5ea0"/><path d="M7.5 2V15" stroke="#a85" stroke-width="1.5"/><path d="M5 15L14 6L16 8L7 16Z" fill="#fc6" stroke="#c93"/></g><g transform="translate(1804,174)"><path d="M1 3Q4 0 7 3Q10 5 13 2V10Q10 13 7 10Q4 7 1 10Z" fill="#5a9ee0" stroke="#2a5ea0"/><path d="M7.5 2V15" stroke="#a85" stroke-width="1.5"/><rect x="7" y="8" width="8" height="8" fill="#7ab" stroke="#235"/><rect x="9" y="12" width="4" height="3" fill="#fff"/></g><g transform="translate(1825,174)"><path d="M0 6H6L3 9Z" fill="#000"/></g><g transform="translate(1836,174)"><path d="M1 3Q4 0 7 3Q10 5 13 2V10Q10 13 7 10Q4 7 1 10Z" fill="#5a9ee0" stroke="#2a5ea0"/><path d="M7.5 2V15" stroke="#a85" stroke-width="1.5"/><path d="M8 10H12V7L16 11L12 15V12H8Z" fill="#4b4"/></g></svg>
</body></html>
